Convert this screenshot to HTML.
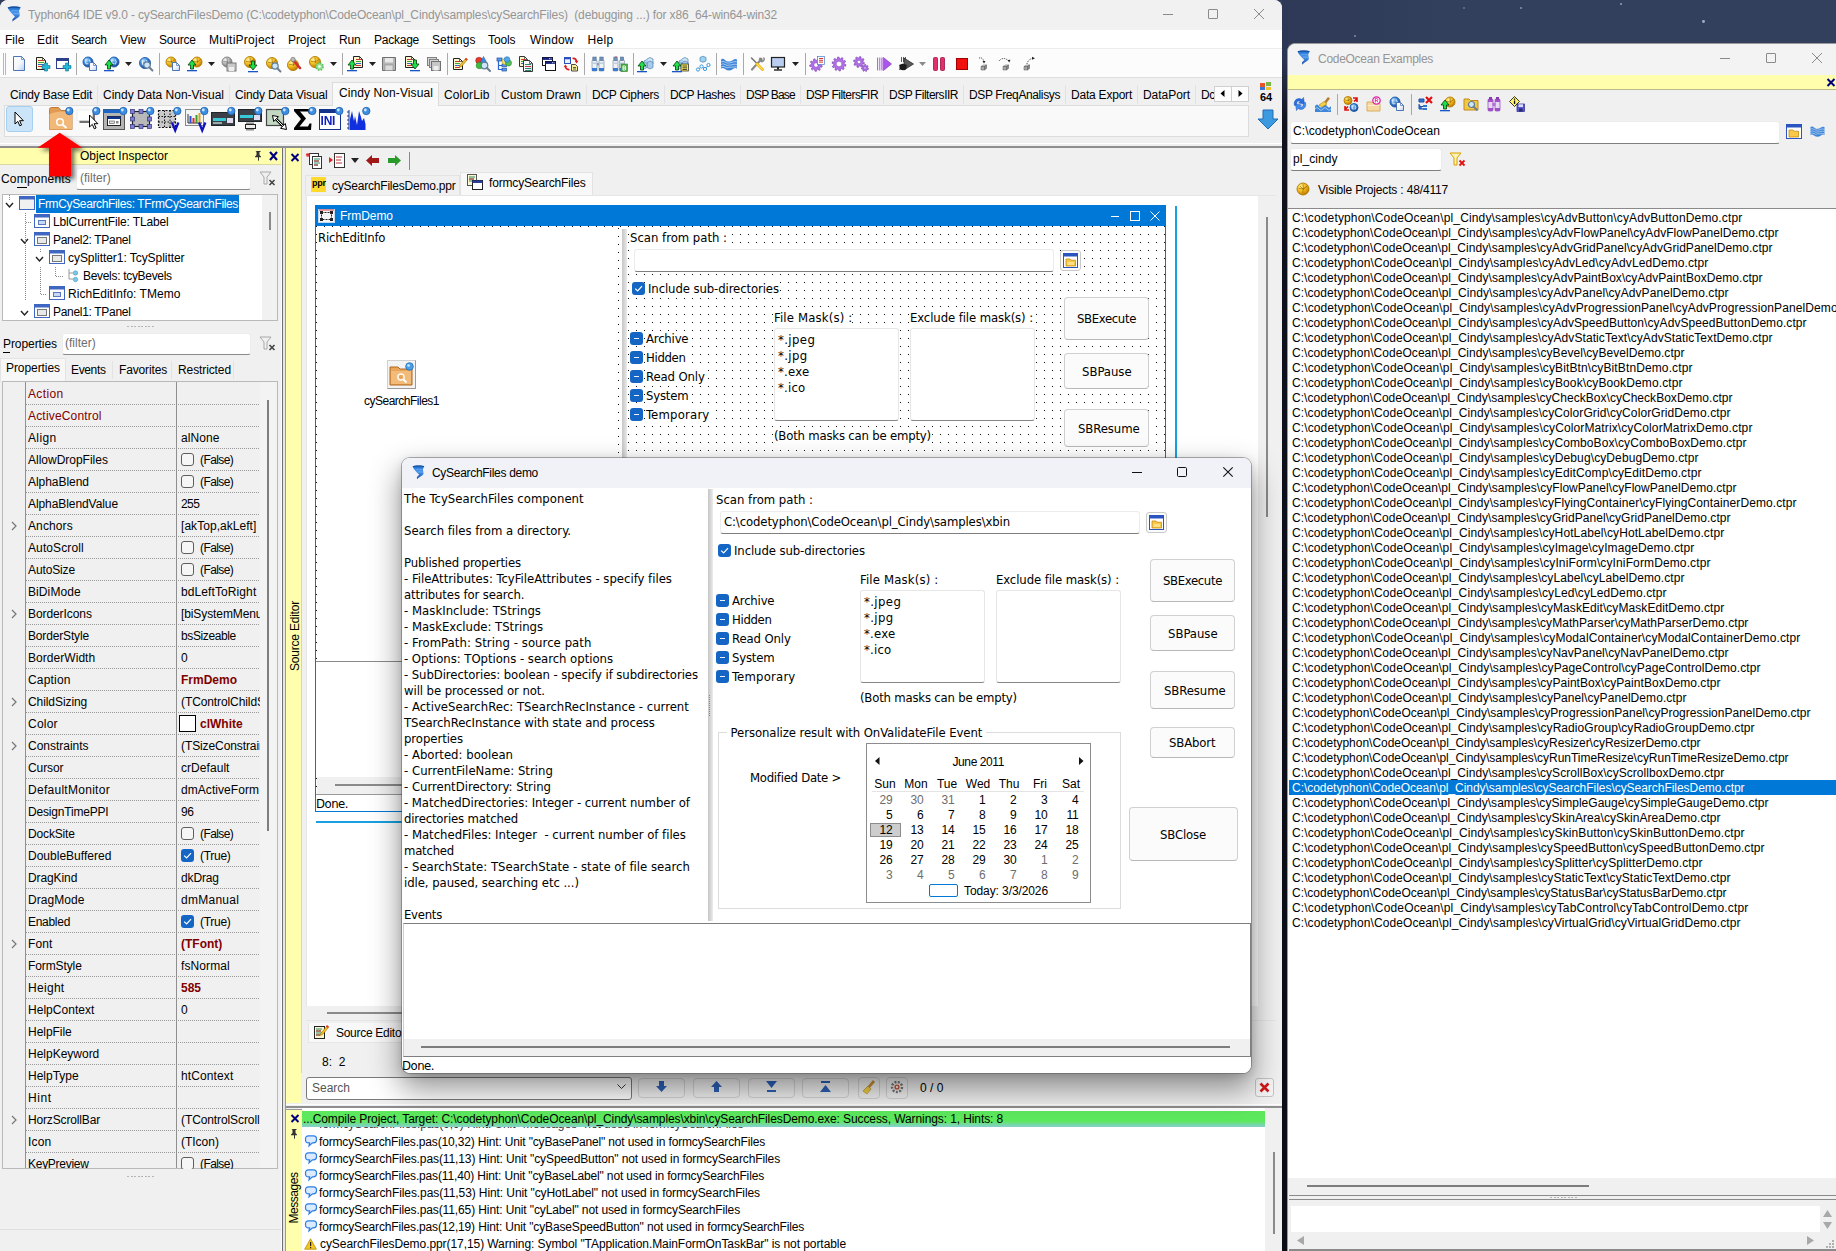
<!DOCTYPE html><html><head><meta charset="utf-8"><title>Typhon64 IDE</title><style>

*{box-sizing:border-box;margin:0;padding:0}
html,body{width:1836px;height:1251px;overflow:hidden}
body{position:relative;background:#313e5c;font-family:"Liberation Sans",sans-serif;font-size:12px;color:#000}
.a{position:absolute}
.t{position:absolute;white-space:nowrap;line-height:14px;height:14px}
.tah{font-family:"DejaVu Sans Condensed","Liberation Sans",sans-serif;font-size:13px;letter-spacing:-.1px}
svg{position:absolute;overflow:visible}
.b{font-weight:bold}

</style></head><body>
<svg width="0" height="0" style="left:0;top:0"><defs><radialGradient id="gY" cx=".35" cy=".3" r=".75"><stop offset="0" stop-color="#fff2a0"/><stop offset=".45" stop-color="#f6c020"/><stop offset="1" stop-color="#b87400"/></radialGradient><radialGradient id="gB" cx=".35" cy=".3" r=".75"><stop offset="0" stop-color="#b8e0ff"/><stop offset=".45" stop-color="#3f8fe0"/><stop offset="1" stop-color="#173f8a"/></radialGradient><radialGradient id="gG" cx=".35" cy=".3" r=".75"><stop offset="0" stop-color="#f4f4f4"/><stop offset=".5" stop-color="#b4b4b4"/><stop offset="1" stop-color="#6a6a6a"/></radialGradient><radialGradient id="gP" cx=".35" cy=".3" r=".75"><stop offset="0" stop-color="#e8c8ff"/><stop offset=".5" stop-color="#a55ad6"/><stop offset="1" stop-color="#5a2090"/></radialGradient><linearGradient id="gD" x1="0" y1="0" x2="1" y2="1"><stop offset="0" stop-color="#ffffff"/><stop offset=".55" stop-color="#f2f6fd"/><stop offset="1" stop-color="#b9cdf0"/></linearGradient></defs></svg>
<div class="a " style="left:1282px;top:0px;width:554px;height:44px;background:linear-gradient(90deg,#2d3956,#323f5d 30%,#323f5d)"></div>
<div class="a " style="left:1354px;top:35px;width:2.4px;height:2.4px;background:#c5cde0;border-radius:50%;opacity:0.55"></div>
<div class="a " style="left:1463px;top:7px;width:2px;height:2px;background:#c5cde0;border-radius:50%;opacity:0.4"></div>
<div class="a " style="left:1520px;top:7px;width:2.2px;height:2.2px;background:#c5cde0;border-radius:50%;opacity:0.6"></div>
<div class="a " style="left:1620px;top:3px;width:2.2px;height:2.2px;background:#c5cde0;border-radius:50%;opacity:0.7"></div>
<div class="a " style="left:1702px;top:20px;width:2.8px;height:2.8px;background:#c5cde0;border-radius:50%;opacity:0.75"></div>
<div class="a " style="left:1282px;top:0px;width:6px;height:1251px;background:linear-gradient(180deg,#2e3a58 0,#2b3653 60px,#1b2033 95px,#0f121d 125px,#0b0d16 100%)"></div>
<div class="a ide" style="left:0px;top:0px;width:1282px;height:1251px;background:#f0f0f0;border-radius:8px 8px 0 0;overflow:hidden"></div>
<div class="a oce" style="left:1287px;top:43px;width:560px;height:1215px;background:#f0f0f0;border-top-left-radius:8px;border:1px solid #9a9a9a;overflow:hidden"></div>
<div class="a " style="left:0px;top:0px;width:1282px;height:30px;background:#f1f1f1;border-radius:8px 8px 0 0"></div>
<svg style="left:7px;top:6px" width="14.0" height="16" viewBox="0 0 14 16"><defs><linearGradient id="tg1" x1="0" y1="0" x2="0" y2="1"><stop offset="0" stop-color="#1a5cb4"/><stop offset=".18" stop-color="#2f7fdc"/><stop offset=".45" stop-color="#4b97ea"/><stop offset=".75" stop-color="#2a6cc8"/><stop offset="1" stop-color="#2b4c98"/></linearGradient></defs><path d="M0.600 1.600C2 0.100 12 0.100 13.600 1.400L12 4.800C12.200 6.500 12.900 8.500 12.600 10C11.500 11.800 8.500 13 6.600 14.600L5.600 15.700L5.300 13.400C6.200 12.300 7.200 11.600 8 10.800C5.500 8.500 2 5 0.600 1.600Z" fill="url(#tg1)"/><path d="M1 1.900C3.500 0.900 10.500 0.900 13.200 1.700" stroke="#154f9e" stroke-width="1.100" fill="none"/><path d="M4 5.200C6.500 4.400 9.500 4.500 11.500 5.200M6.500 8C8.500 7.500 10.500 7.600 12 8.200" stroke="#8cc2f6" stroke-width=".7" fill="none" opacity=".8"/></svg>
<div class="t " style="left:28px;top:8px;letter-spacing:-0.139px;color:#959595;white-space:pre">Typhon64 IDE v9.0 - cySearchFilesDemo (C:\codetyphon\CodeOcean\pl_Cindy\samples\cySearchFiles)  (debugging ...) for x86_64-win64-win32</div>
<div class="a " style="left:1163px;top:14px;width:10px;height:1px;background:#8a8a8a"></div><div class="a " style="left:1208px;top:9px;width:10px;height:10px;border:1px solid #8a8a8a;border-radius:1px"></div><svg style="left:1254px;top:9px" width="10" height="10" viewBox="0 0 10 10"><path d="M0 0L10 10M10 0L0 10" stroke="#8a8a8a" stroke-width="1" fill="none"/></svg>
<div class="a " style="left:0px;top:30px;width:1282px;height:19px;background:#fff"></div>
<div class="t " style="left:5px;top:33px;letter-spacing:-0.011px;">File</div>
<div class="t " style="left:37px;top:33px;letter-spacing:0.232px;">Edit</div>
<div class="t " style="left:71px;top:33px;letter-spacing:-0.436px;">Search</div>
<div class="t " style="left:120px;top:33px;letter-spacing:-0.049px;">View</div>
<div class="t " style="left:159px;top:33px;letter-spacing:-0.236px;">Source</div>
<div class="t " style="left:209px;top:33px;letter-spacing:0.251px;">MultiProject</div>
<div class="t " style="left:288px;top:33px;letter-spacing:0.037px;">Project</div>
<div class="t " style="left:339px;top:33px;letter-spacing:-0.139px;">Run</div>
<div class="t " style="left:374px;top:33px;letter-spacing:-0.241px;">Package</div>
<div class="t " style="left:432px;top:33px;letter-spacing:0.02px;">Settings</div>
<div class="t " style="left:488px;top:33px;letter-spacing:-0.103px;">Tools</div>
<div class="t " style="left:530px;top:33px;letter-spacing:0.169px;">Window</div>
<div class="t " style="left:587.5px;top:33px;letter-spacing:0.328px;">Help</div>
<div class="a " style="left:0px;top:48px;width:1282px;height:1px;background:#ececec"></div>
<div class="a " style="left:0px;top:49px;width:1282px;height:28px;background:#fcfcfc"></div>
<div class="a " style="left:0px;top:77px;width:1282px;height:1px;background:#dedede"></div>
<div class="a " style="left:3px;top:53px;width:1px;height:22px;background:#b8b8b8"></div>
<div class="a " style="left:5px;top:53px;width:1px;height:22px;background:#b8b8b8"></div>
<svg style="left:11px;top:56px" width="16" height="16" viewBox="0 0 16 16"><path d="M2.5 0.5h8l3 3v11h-11z" fill="url(#gD)" stroke="#4d74b4" stroke-width="1"/><path d="M10.5 0.5v3h3" fill="none" stroke="#4d74b4" stroke-width=".7"/></svg>
<svg style="left:34px;top:56px" width="16" height="16" viewBox="0 0 16 16"><path d="M2.5 1.5h6l3 3v9h-9z" fill="#fbf6d0" stroke="#222" stroke-width="1"/><path d="M8.5 1.5v3h3" fill="none" stroke="#222" stroke-width=".7"/><rect x="4" y="4" width="6" height="1" fill="#c33"/><rect x="4" y="6" width="6" height="1" fill="#3a3"/><rect x="4" y="8" width="6" height="1" fill="#36c"/><rect x="4" y="10" width="6" height="1" fill="#c33"/><path d="M10.5 7h3v2.5h2.5v3h-2.5v2.5h-3v-2.5h-2.5v-3h2.5z" fill="#1fb8d8" stroke="#14708c" stroke-width=".6"/></svg>
<svg style="left:55px;top:56px" width="16" height="16" viewBox="0 0 16 16"><rect x="1.5" y="2.5" width="12" height="10" fill="#fff" stroke="#2b3f8a"/><rect x="1.5" y="2.5" width="12" height="2.5" fill="#2b3f8a"/><path d="M10.5 7h3v2.5h2.5v3h-2.5v2.5h-3v-2.5h-2.5v-3h2.5z" fill="#1fb8d8" stroke="#14708c" stroke-width=".6"/></svg>
<div class="a " style="left:76px;top:53px;width:1px;height:22px;background:#a9a9a9"></div>
<svg style="left:82px;top:56px" width="16" height="16" viewBox="0 0 16 16"><circle cx="6" cy="6" r="5" fill="url(#gB)" stroke="#1e58a8" stroke-width=".9"/><path d="M3.75 3.5v4.0q1.75 1.5 2.5 -0.5M7.25 3.5q2.0 2.5 0 5" stroke="#fff" stroke-width=".9" fill="none" opacity=".9"/><path d="M7.5 6.5h4l3 3v5h-7z" fill="url(#gD)" stroke="#4d74b4" stroke-width="1"/><path d="M11.5 6.5v3h3" fill="none" stroke="#4d74b4" stroke-width=".7"/></svg>
<svg style="left:104px;top:56px" width="16" height="16" viewBox="0 0 16 16"><circle cx="10" cy="6" r="5" fill="url(#gB)" stroke="#1e58a8" stroke-width=".9"/><path d="M7.75 3.5v4.0q1.75 1.5 2.5 -0.5M11.25 3.5q2.0 2.5 0 5" stroke="#fff" stroke-width=".9" fill="none" opacity=".9"/><path d="M1 9l4 -5l4 5h-2.5v4h-3v-4z" fill="#1fe04a" stroke="#053a0a" stroke-width=".8"/><rect x="0" y="14" width="10" height="1.3" fill="#1455c8"/></svg>
<svg style="left:125px;top:62px" width="7" height="4" viewBox="0 0 7 4"><path d="M0 0h7L3.5 4z" fill="#222"/></svg>
<svg style="left:138px;top:56px" width="16" height="16" viewBox="0 0 16 16"><circle cx="7" cy="7" r="5.5" fill="url(#gB)" stroke="#1e58a8" stroke-width=".9"/><path d="M4.525 4.25v4.4q1.9249999999999998 1.65 2.75 -0.55M8.375 4.25q2.2 2.75 0 5.5" stroke="#fff" stroke-width=".9" fill="none" opacity=".9"/><circle cx="9" cy="9" r="3.2" fill="#cfe6f7" stroke="#5f7d97" stroke-width="1.2"/><path d="M11.24 11.24l3.2 3.2" stroke="#6b7f90" stroke-width="2" stroke-linecap="round"/></svg>
<div class="a " style="left:159px;top:53px;width:1px;height:22px;background:#a9a9a9"></div>
<svg style="left:165px;top:56px" width="16" height="16" viewBox="0 0 16 16"><circle cx="6" cy="6" r="5" fill="url(#gY)" stroke="#b07a00" stroke-width=".9"/><path d="M2.5 5.5l4.5 0.5M6 2.0l0.5 4.5M6.5 6l3.0 -2.5" stroke="#7a4a00" stroke-width=".7" fill="none" opacity=".75"/><path d="M7.5 6.5h4l3 3v5h-7z" fill="url(#gD)" stroke="#4d74b4" stroke-width="1"/><path d="M11.5 6.5v3h3" fill="none" stroke="#4d74b4" stroke-width=".7"/></svg>
<svg style="left:187px;top:56px" width="16" height="16" viewBox="0 0 16 16"><circle cx="10" cy="6" r="5" fill="url(#gY)" stroke="#b07a00" stroke-width=".9"/><path d="M6.5 5.5l4.5 0.5M10 2.0l0.5 4.5M10.5 6l3.0 -2.5" stroke="#7a4a00" stroke-width=".7" fill="none" opacity=".75"/><path d="M1 9l4 -5l4 5h-2.5v4h-3v-4z" fill="#1fe04a" stroke="#053a0a" stroke-width=".8"/><rect x="0" y="14" width="10" height="1.3" fill="#1455c8"/></svg>
<svg style="left:208px;top:62px" width="7" height="4" viewBox="0 0 7 4"><path d="M0 0h7L3.5 4z" fill="#222"/></svg>
<svg style="left:221px;top:56px" width="16" height="16" viewBox="0 0 16 16"><circle cx="6" cy="6" r="5" fill="url(#gG)" stroke="#7d7d7d" stroke-width=".9"/><path d="M2.5 5.5l4.5 0.5M6 2.0l0.5 4.5" stroke="#555" stroke-width=".7" fill="none" opacity=".7"/><rect x="6" y="7" width="9" height="8" fill="#c9c9c9" stroke="#777"/><rect x="8" y="11" width="5" height="4" fill="#eee"/></svg>
<svg style="left:243px;top:56px" width="16" height="16" viewBox="0 0 16 16"><circle cx="7" cy="6" r="5.5" fill="url(#gY)" stroke="#b07a00" stroke-width=".9"/><path d="M3.1500000000000004 5.45l4.95 0.55M7 1.5999999999999996l0.55 4.95M7.55 6l3.3 -2.75" stroke="#7a4a00" stroke-width=".7" fill="none" opacity=".75"/><path d="M6 9l4 5l4 -5h-2.5v-4h-3v4z" fill="#1fe04a" stroke="#053a0a" stroke-width=".8"/><rect x="5" y="15" width="10" height="1.3" fill="#1455c8"/></svg>
<svg style="left:265px;top:56px" width="16" height="16" viewBox="0 0 16 16"><circle cx="7" cy="7" r="5.5" fill="url(#gY)" stroke="#b07a00" stroke-width=".9"/><path d="M3.1500000000000004 6.45l4.95 0.55M7 2.5999999999999996l0.55 4.95M7.55 7l3.3 -2.75" stroke="#7a4a00" stroke-width=".7" fill="none" opacity=".75"/><circle cx="10" cy="10" r="3.2" fill="#cfe6f7" stroke="#5f7d97" stroke-width="1.2"/><path d="M12.24 12.24l3.2 3.2" stroke="#6b7f90" stroke-width="2" stroke-linecap="round"/></svg>
<svg style="left:287px;top:56px" width="16" height="16" viewBox="0 0 16 16"><circle cx="6" cy="9" r="5.5" fill="url(#gY)" stroke="#b07a00" stroke-width=".9"/><path d="M2.1500000000000004 8.45l4.95 0.55M6 4.6l0.55 4.95M6.55 9l3.3 -2.75" stroke="#7a4a00" stroke-width=".7" fill="none" opacity=".75"/><path d="M6 4l7 8" stroke="#d03030" stroke-width="2.6" stroke-linecap="round"/><circle cx="6" cy="3.5" r="2.2" fill="#bbb" stroke="#777" stroke-width=".7"/></svg>
<svg style="left:309px;top:56px" width="16" height="16" viewBox="0 0 16 16"><circle cx="6" cy="6" r="5.5" fill="url(#gY)" stroke="#b07a00" stroke-width=".9"/><path d="M2.1500000000000004 5.45l4.95 0.55M6 1.5999999999999996l0.55 4.95M6.55 6l3.3 -2.75" stroke="#7a4a00" stroke-width=".7" fill="none" opacity=".75"/><circle cx="10.5" cy="10.5" r="3.6" fill="#8fe08f" stroke="#5fc05f" stroke-width="1.6" stroke-dasharray="1.6 1.2"/><circle cx="10.5" cy="10.5" r="1.3" fill="#fff"/></svg>
<svg style="left:330px;top:62px" width="7" height="4" viewBox="0 0 7 4"><path d="M0 0h7L3.5 4z" fill="#222"/></svg>
<div class="a " style="left:342px;top:53px;width:1px;height:22px;background:#a9a9a9"></div>
<svg style="left:348px;top:56px" width="16" height="16" viewBox="0 0 16 16"><path d="M5.5 0.5h6l3 3v8h-9z" fill="#fbf6d0" stroke="#222" stroke-width="1"/><path d="M11.5 0.5v3h3" fill="none" stroke="#222" stroke-width=".7"/><rect x="8" y="3" width="5" height="1" fill="#c33"/><rect x="8" y="5" width="5" height="1" fill="#3a3"/><rect x="8" y="7" width="5" height="1" fill="#36c"/><rect x="8" y="9" width="5" height="1" fill="#c33"/><path d="M0 9l4 -5l4 5h-2.5v4h-3v-4z" fill="#1fe04a" stroke="#053a0a" stroke-width=".8"/><rect x="-1" y="14" width="10" height="1.3" fill="#1455c8"/></svg>
<svg style="left:369px;top:62px" width="7" height="4" viewBox="0 0 7 4"><path d="M0 0h7L3.5 4z" fill="#222"/></svg>
<svg style="left:381px;top:56px" width="16" height="16" viewBox="0 0 16 16"><path d="M1.5 1.5h13v13h-13z" fill="#b5b5b5" stroke="#6f6f6f"/><rect x="4" y="2" width="8" height="4.5" fill="#e9e9e9"/><rect x="4" y="9" width="8" height="5.5" fill="#dcdcdc" stroke="#8a8a8a" stroke-width=".6"/></svg>
<svg style="left:404px;top:56px" width="16" height="16" viewBox="0 0 16 16"><path d="M1.5 0.5h6l3 3v8h-9z" fill="#fbf6d0" stroke="#222" stroke-width="1"/><path d="M7.5 0.5v3h3" fill="none" stroke="#222" stroke-width=".7"/><rect x="3" y="3" width="5" height="1" fill="#c33"/><rect x="3" y="5" width="5" height="1" fill="#3a3"/><rect x="3" y="7" width="5" height="1" fill="#36c"/><rect x="3" y="9" width="5" height="1" fill="#c33"/><path d="M7 8l4 5l4 -5h-2.5v-4h-3v4z" fill="#1fe04a" stroke="#053a0a" stroke-width=".8"/><rect x="6" y="14" width="10" height="1.3" fill="#1455c8"/></svg>
<svg style="left:426px;top:56px" width="16" height="16" viewBox="0 0 16 16"><rect x="1.5" y="1.5" width="9" height="8" fill="#d5d5d5" stroke="#808080"/><rect x="3.5" y="3.5" width="9" height="8" fill="#d5d5d5" stroke="#808080"/><rect x="5.5" y="5.5" width="9" height="9" fill="#c6c6c6" stroke="#707070"/><rect x="7.5" y="10" width="5" height="4.5" fill="#eee"/></svg>
<div class="a " style="left:447px;top:53px;width:1px;height:22px;background:#a9a9a9"></div>
<svg style="left:452px;top:56px" width="16" height="16" viewBox="0 0 16 16"><path d="M1.5 2.5h6l3 3v8h-9z" fill="#fbf6d0" stroke="#222" stroke-width="1"/><path d="M7.5 2.5v3h3" fill="none" stroke="#222" stroke-width=".7"/><rect x="3" y="5" width="5" height="1" fill="#c33"/><rect x="3" y="7" width="5" height="1" fill="#3a3"/><rect x="3" y="9" width="5" height="1" fill="#36c"/><rect x="3" y="11" width="5" height="1" fill="#c33"/><path d="M8 9l6 -7l1.6 1.4l-6 7l-2.4 1z" fill="#f2c12e" stroke="#a36b00" stroke-width=".6"/><path d="M13.4 2.6l1.6 1.4" stroke="#e03030" stroke-width="1.6"/></svg>
<svg style="left:475px;top:56px" width="16" height="16" viewBox="0 0 16 16"><circle cx="4" cy="4.500" r="3.300" fill="#e03a2a" stroke="#a01810" stroke-width=".5"/><path d="M8.500 .5l3.500 6.500h-7z" fill="#3b8be0" stroke="#1a58a8" stroke-width=".5"/><circle cx="4.500" cy="9.500" r="3.300" fill="#3dbb3d" stroke="#1a7a1a" stroke-width=".5"/><circle cx="9.5" cy="9.5" r="3.3" fill="#cfe6f7" stroke="#5f7d97" stroke-width="1.2"/><path d="M11.809999999999999 11.809999999999999l3.2 3.2" stroke="#6b7f90" stroke-width="2" stroke-linecap="round"/></svg>
<svg style="left:496px;top:56px" width="16" height="16" viewBox="0 0 16 16"><path d="M2.500 4v9.500h4M2.500 9.500h4" fill="none" stroke="#2e66d0" stroke-width="1.200"/><rect x="1" y="2" width="5" height="3" fill="#5a9af0" stroke="#1e4fa0" stroke-width=".7"/><rect x="6" y="8" width="4.500" height="2.800" fill="#5a9af0" stroke="#1e4fa0" stroke-width=".7"/><rect x="6" y="12.200" width="4.500" height="2.800" fill="#5a9af0" stroke="#1e4fa0" stroke-width=".7"/><circle cx="9" cy="5.500" r="3" fill="#f2e070" stroke="#b09a20" stroke-width=".6"/><circle cx="12.500" cy="7" r="3" fill="#58c058" stroke="#2a8a2a" stroke-width=".6"/><circle cx="11" cy="3.500" r="2.800" fill="#4fa8e8" stroke="#2276b5" stroke-width=".6"/></svg>
<svg style="left:518px;top:56px" width="16" height="16" viewBox="0 0 16 16"><path d="M1.5 0.5h5l3 3v7h-8z" fill="#fbf6d0" stroke="#333" stroke-width="1"/><path d="M6.5 0.5v3h3" fill="none" stroke="#333" stroke-width=".7"/><rect x="3" y="3" width="4" height="1" fill="#c33"/><rect x="3" y="5" width="4" height="1" fill="#3a3"/><rect x="3" y="7" width="4" height="1" fill="#36c"/><path d="M5.5 4.5h6l3 3v8h-9z" fill="url(#gD)" stroke="#333" stroke-width="1"/><path d="M11.5 4.5v3h3" fill="none" stroke="#333" stroke-width=".7"/><rect x="7" y="8" width="6" height="1" fill="#2a8a6a"/><rect x="7" y="10" width="6" height="1" fill="#c33"/><rect x="7" y="12" width="6" height="1" fill="#2a8a6a"/><rect x="7" y="14" width="6" height="1" fill="#2a8a6a"/></svg>
<svg style="left:541px;top:56px" width="16" height="16" viewBox="0 0 16 16"><rect x="1.500" y="1.500" width="10" height="8" fill="#fff" stroke="#111"/><rect x="1.500" y="1.500" width="10" height="2.400" fill="#14207a"/><rect x="4.500" y="5.500" width="10" height="9" fill="#fff" stroke="#111"/><rect x="4.500" y="5.500" width="10" height="2.400" fill="#14207a"/><path d="M8 2.700h2.500M11 6.700h2.500" stroke="#fff" stroke-width=".8" stroke-dasharray="1 .6"/></svg>
<svg style="left:563px;top:56px" width="16" height="16" viewBox="0 0 16 16"><rect x="1.500" y="1.500" width="6" height="6" fill="#eaf2ff" stroke="#2a50c0"/><rect x="1.500" y="1.500" width="6" height="1.800" fill="#2a50c0"/><path d="M8.500 8.500h4l2 2v4.500h-6z" fill="#f7ef9a" stroke="#222" stroke-width=".8"/><path d="M10 11.500h3M10 13h3" stroke="#222" stroke-width=".7"/><path d="M9.500 2.500q3.500-.5 4 3" stroke="#e01818" stroke-width="1.700" fill="none"/><path d="M11.800 5.200l2 2.300l1.500-2.800z" fill="#e01818"/><path d="M6.500 13.500q-3.500.5-4-3" stroke="#e01818" stroke-width="1.700" fill="none"/><path d="M4.200 10.800l-2-2.300l-1.500 2.800z" fill="#e01818"/></svg>
<div class="a " style="left:584px;top:53px;width:1px;height:22px;background:#a9a9a9"></div>
<svg style="left:590px;top:56px" width="16" height="16" viewBox="0 0 16 16"><rect x="2" y="4" width="5" height="11" rx="1" fill="#eef2f7" stroke="#7890a8" stroke-width=".7"/><rect x="2.8" y="1" width="3.400" height="3.500" fill="#6f90b8" stroke="#4a6a90" stroke-width=".5"/><rect x="2" y="12" width="5" height="3" fill="#3a7ad0"/><rect x="2" y="6.500" width="5" height="1.500" fill="#c0cede"/><rect x="9" y="4" width="5" height="11" rx="1" fill="#eef2f7" stroke="#7890a8" stroke-width=".7"/><rect x="9.8" y="1" width="3.400" height="3.500" fill="#6f90b8" stroke="#4a6a90" stroke-width=".5"/><rect x="9" y="12" width="5" height="3" fill="#3a7ad0"/><rect x="9" y="6.500" width="5" height="1.500" fill="#c0cede"/><rect x="7" y="7" width="2" height="2.500" fill="#8aa0b8"/></svg>
<svg style="left:612px;top:56px" width="16" height="16" viewBox="0 0 16 16"><rect x="1" y="4" width="5" height="11" rx="1" fill="#eef2f7" stroke="#7890a8" stroke-width=".7"/><rect x="1.8" y="1" width="3.400" height="3.500" fill="#6f90b8" stroke="#4a6a90" stroke-width=".5"/><rect x="1" y="12" width="5" height="3" fill="#3a7ad0"/><rect x="1" y="6.500" width="5" height="1.500" fill="#c0cede"/><rect x="7.5" y="4" width="5" height="11" rx="1" fill="#eef2f7" stroke="#7890a8" stroke-width=".7"/><rect x="8.3" y="1" width="3.400" height="3.500" fill="#6f90b8" stroke="#4a6a90" stroke-width=".5"/><rect x="7.5" y="12" width="5" height="3" fill="#3a7ad0"/><rect x="7.5" y="6.500" width="5" height="1.500" fill="#c0cede"/><rect x="9" y="8" width="6.500" height="7.500" fill="#4fb04f" stroke="#2a7a2a" stroke-width=".6"/><path d="M11 10v4h1.800q1 0 1-1t-1-1q.8 0 .8-1t-1-1zM11 12h2" stroke="#fff" stroke-width=".9" fill="none"/><path d="M3 1h2" stroke="#c06060"/></svg>
<div class="a " style="left:633px;top:53px;width:1px;height:22px;background:#a9a9a9"></div>
<svg style="left:638px;top:56px" width="16" height="16" viewBox="0 0 16 16"><path d="M6 5l3-1.500l3 1.500v4l-3 1.500l-3-1.500z" fill="#b8d8f0" stroke="#4a80b0" stroke-width=".7"/><path d="M9 3l3-1.500l3 1.500v5l-3 1.500" fill="#cfe6f7" stroke="#4a80b0" stroke-width=".7"/><path d="M9 6.500l3-1.500l3 1.500v5l-3 1.500l-3-1.500z" fill="#a8cce8" stroke="#4a80b0" stroke-width=".7"/><path d="M4 7.500l2.500-1.200l2.500 1.200v4l-2.500 1.200l-2.500-1.200z" fill="#c4def2" stroke="#4a80b0" stroke-width=".7"/><path d="M0 10l4 -5l4 5h-2.5v4h-3v-4z" fill="#1fe04a" stroke="#053a0a" stroke-width=".8"/><rect x="-1" y="15" width="10" height="1.3" fill="#1455c8"/></svg>
<svg style="left:660px;top:62px" width="7" height="4" viewBox="0 0 7 4"><path d="M0 0h7L3.5 4z" fill="#222"/></svg>
<svg style="left:673px;top:56px" width="16" height="16" viewBox="0 0 16 16"><path d="M6 5l3-1.500l3 1.500v4l-3 1.500l-3-1.500z" fill="#b8d8f0" stroke="#4a80b0" stroke-width=".7"/><path d="M9 3l3-1.500l3 1.500v5l-3 1.500" fill="#cfe6f7" stroke="#4a80b0" stroke-width=".7"/><path d="M9 6.500l3-1.500l3 1.500v5l-3 1.500l-3-1.500z" fill="#a8cce8" stroke="#4a80b0" stroke-width=".7"/><path d="M4 7.500l2.500-1.200l2.500 1.200v4l-2.500 1.200l-2.500-1.200z" fill="#c4def2" stroke="#4a80b0" stroke-width=".7"/><rect x="8" y="8" width="7.500" height="7" fill="#f7e85a" stroke="#222" stroke-width=".7"/><path d="M9.500 10h4.500M9.500 11.800h4.500M9.500 13.500h4.500" stroke="#222" stroke-width=".8"/><path d="M0 10l4 -5l4 5h-2.5v4h-3v-4z" fill="#1fe04a" stroke="#053a0a" stroke-width=".8"/><rect x="-1" y="15" width="10" height="1.3" fill="#1455c8"/></svg>
<svg style="left:695px;top:56px" width="16" height="16" viewBox="0 0 16 16"><path d="M5 1.500l3-1.300l3 1.300v3.500l-3 1.300l-3-1.300z" fill="#9fd0ee" stroke="#3a88b8" stroke-width=".7"/><path d="M3 13.500l3.500-3l3.500 2.500l3.500-4" stroke="#5aaee0" stroke-width="1" fill="none"/><circle cx="3" cy="13.500" r="1.600" fill="#fff" stroke="#3a98d8"/><circle cx="6.500" cy="10.500" r="1.600" fill="#fff" stroke="#3a98d8"/><circle cx="10" cy="13" r="1.600" fill="#fff" stroke="#3a98d8"/><circle cx="13.500" cy="9" r="1.600" fill="#fff" stroke="#3a98d8"/></svg>
<div class="a " style="left:716px;top:53px;width:1px;height:22px;background:#a9a9a9"></div>
<svg style="left:721px;top:56px" width="16" height="16" viewBox="0 0 16 16"><path d="M0 3.500q2-1.500 4 .5t4 1.500q2 0 4-1.500t4-.5v9q-2-1-4 .5t-4 1.500q-2 0-4-1.500t-4-.5z" fill="#3f86d8"/><path d="M0 6q2-1.500 4 0t4 1q2-.2 4-1t4 0M0 8.500q2-1.500 4 0t4 .6q2 0 4-.6t4 0M0 11q2-1.500 4 0t4 .2q2 0 4-.2t4 0" stroke="#cfe2f8" stroke-width=".7" fill="none"/></svg>
<div class="a " style="left:743px;top:53px;width:1px;height:22px;background:#a9a9a9"></div>
<svg style="left:749px;top:56px" width="16" height="16" viewBox="0 0 16 16"><path d="M3 13.500L12.500 3" stroke="#8a8a8a" stroke-width="2.200" stroke-linecap="round"/><path d="M11 1.500a3 3 0 0 0 3.500 3.500l-1.500-.5l-.5-1.500z" fill="#9a9a9a" stroke="#666" stroke-width=".5"/><circle cx="12.800" cy="3.200" r="2.300" fill="none" stroke="#8a8a8a" stroke-width="1.400" stroke-dasharray="9 5.400" transform="rotate(-45 12.800 3.200)"/><path d="M2.500 2l6 6" stroke="#777" stroke-width="1.600" stroke-linecap="round"/><path d="M8 8l5.500 5.500" stroke="#f2c020" stroke-width="3" stroke-linecap="round"/><path d="M8 8l5.500 5.500" stroke="#fbe27a" stroke-width="1"/></svg>
<svg style="left:770px;top:56px" width="16" height="16" viewBox="0 0 16 16"><rect x="1.500" y="1.500" width="13" height="9.500" fill="#b9cdf0" stroke="#222" stroke-width="1.200"/><rect x="7" y="11" width="2" height="2.500" fill="#222"/><rect x="4" y="13.300" width="8" height="1.400" fill="#222"/></svg>
<svg style="left:792px;top:62px" width="7" height="4" viewBox="0 0 7 4"><path d="M0 0h7L3.5 4z" fill="#222"/></svg>
<div class="a " style="left:805px;top:53px;width:1px;height:22px;background:#a9a9a9"></div>
<svg style="left:809px;top:56px" width="16" height="16" viewBox="0 0 16 16"><path d="M11.60 9.00L13.27 9.66L12.92 11.15L11.13 11.02L10.52 11.96L11.38 13.53L10.15 14.46L8.87 13.20L7.80 13.53L7.44 15.28L5.91 15.20L5.73 13.42L4.70 12.98L3.30 14.10L2.17 13.05L3.19 11.57L2.68 10.57L0.89 10.52L0.70 9.00L2.43 8.52L2.68 7.43L1.34 6.24L2.17 4.95L3.80 5.69L4.70 5.02L4.44 3.24L5.91 2.80L6.68 4.41L7.80 4.47L8.74 2.94L10.15 3.54L9.70 5.28L10.52 6.04L12.22 5.48L12.92 6.85L11.46 7.89Z" fill="#b070e8" stroke="#7a3ab0" stroke-width=".6"/><circle cx="7" cy="9" r="2.2" fill="#fff" stroke="#7a3ab0" stroke-width=".5"/><rect x="8.500" y=".5" width="7" height="8" fill="#fff" stroke="#4a78c8" stroke-width=".7"/><path d="M10 2.500h4M10 4.300h4M10 6.100h4" stroke="#d02020" stroke-width=".9"/></svg>
<svg style="left:831px;top:56px" width="16" height="16" viewBox="0 0 16 16"><path d="M13.20 8.00L14.97 8.66L14.66 10.16L12.77 10.07L12.21 11.06L13.25 12.63L12.11 13.66L10.65 12.48L9.61 12.95L9.53 14.83L8.00 15.00L7.51 13.18L6.39 12.95L5.22 14.42L3.89 13.66L4.56 11.90L3.79 11.06L1.97 11.56L1.34 10.16L2.93 9.13L2.80 8.00L1.03 7.34L1.34 5.84L3.23 5.93L3.79 4.94L2.75 3.37L3.89 2.34L5.35 3.52L6.39 3.05L6.47 1.17L8.00 1.00L8.49 2.82L9.61 3.05L10.78 1.58L12.11 2.34L11.44 4.10L12.21 4.94L14.03 4.44L14.66 5.84L13.07 6.87Z" fill="#b070e8" stroke="#7a3ab0" stroke-width=".6"/><circle cx="8" cy="8" r="2.8" fill="#fff" stroke="#7a3ab0" stroke-width=".5"/></svg>
<svg style="left:853px;top:56px" width="16" height="16" viewBox="0 0 16 16"><path d="M10.00 6.00L11.46 6.65L11.08 8.10L9.49 7.95L8.83 8.83L9.41 10.32L8.10 11.08L7.09 9.85L6.00 10.00L5.35 11.46L3.90 11.08L4.05 9.49L3.17 8.83L1.68 9.41L0.92 8.10L2.15 7.09L2.00 6.00L0.54 5.35L0.92 3.90L2.51 4.05L3.17 3.17L2.59 1.68L3.90 0.92L4.91 2.15L6.00 2.00L6.65 0.54L8.10 0.92L7.95 2.51L8.83 3.17L10.32 2.59L11.08 3.90L9.85 4.91Z" fill="#b070e8" stroke="#7a3ab0" stroke-width=".6"/><circle cx="6" cy="6" r="1.8" fill="#fff" stroke="#7a3ab0" stroke-width=".5"/><path d="M14.60 12.00L15.57 12.48L15.24 13.56L14.17 13.43L13.62 14.03L13.85 15.09L12.80 15.51L12.23 14.59L11.42 14.53L10.74 15.37L9.76 14.81L10.12 13.80L9.66 13.13L8.58 13.11L8.40 12.00L9.42 11.65L9.66 10.87L9.00 10.02L9.76 9.19L10.67 9.77L11.42 9.47L11.68 8.41L12.80 8.49L12.91 9.57L13.62 9.97L14.60 9.51L15.24 10.44L14.47 11.20Z" fill="#b070e8" stroke="#7a3ab0" stroke-width=".6"/><circle cx="12" cy="12" r="1.1" fill="#fff" stroke="#7a3ab0" stroke-width=".5"/></svg>
<svg style="left:876px;top:56px" width="16" height="16" viewBox="0 0 16 16"><rect x="1" y="1.500" width="1.100" height="13" fill="#b06ae0"/><rect x="3.200" y="1.500" width="1.100" height="13" fill="#b06ae0"/><rect x="5.400" y="1.500" width="1.100" height="13" fill="#a050d8"/><path d="M7.500 1.500l8 6.500l-8 6.500z" fill="#a855e8" stroke="#7a3ab0" stroke-width=".6"/></svg>
<svg style="left:898px;top:56px" width="16" height="16" viewBox="0 0 16 16"><rect x="3" y="1" width=".8" height="5" fill="#333"/><rect x="5" y="1" width=".8" height="5" fill="#333"/><rect x="7" y="1" width=".8" height="5" fill="#333"/><path d="M6 2l9.500 6l-9.500 6z" fill="#5a5a5a" stroke="#222" stroke-width=".7"/><ellipse cx="5" cy="11" rx="3.600" ry="3.300" fill="#1c1c1c"/><path d="M1 9l2 1M1 13.500l2-1M9 9l-2 1" stroke="#111" stroke-width=".8"/></svg>
<svg style="left:919px;top:62px" width="7" height="4" viewBox="0 0 7 4"><path d="M0 0h7L3.5 4z" fill="#8a8a8a"/></svg>
<svg style="left:931px;top:56px" width="16" height="16" viewBox="0 0 16 16"><rect x="2.5" y="1.5" width="4" height="13" rx="1" fill="#e0306a" stroke="#a01040" stroke-width=".8"/><rect x="9.5" y="1.5" width="4" height="13" rx="1" fill="#e0306a" stroke="#a01040" stroke-width=".8"/></svg>
<svg style="left:954px;top:56px" width="16" height="16" viewBox="0 0 16 16"><rect x="2.5" y="2.5" width="11" height="11" fill="#f01010" stroke="#a00000"/></svg>
<svg style="left:976px;top:56px" width="16" height="16" viewBox="0 0 16 16"><path d="M5 10.5l2.500-1.500h3l-2 1.500z" fill="#d8d8d8" stroke="#555" stroke-width=".5"/><path d="M5 10.5h3.500v3.500h-3.500z" fill="#a8a8a8" stroke="#555" stroke-width=".5"/><path d="M8.5 10.5l2-1.500v3.500l-2 1.500z" fill="#888" stroke="#555" stroke-width=".5"/><path d="M3 2q4-1 5 4" stroke="#333" fill="none" stroke-dasharray="1 1"/><path d="M6.500 5l1.500 2.500l1.500-2.500z" fill="#222"/></svg>
<svg style="left:998px;top:56px" width="16" height="16" viewBox="0 0 16 16"><path d="M5 10.5l2.500-1.500h3l-2 1.500z" fill="#d8d8d8" stroke="#555" stroke-width=".5"/><path d="M5 10.5h3.500v3.500h-3.500z" fill="#a8a8a8" stroke="#555" stroke-width=".5"/><path d="M8.5 10.5l2-1.500v3.500l-2 1.500z" fill="#888" stroke="#555" stroke-width=".5"/><path d="M1 5q4-5 10 0" stroke="#333" fill="none" stroke-dasharray="1 1"/><path d="M9.500 4l1.800 2.500l1.200-2.800z" fill="#222"/></svg>
<svg style="left:1021px;top:56px" width="16" height="16" viewBox="0 0 16 16"><path d="M3 10.5l2.500-1.500h3l-2 1.500z" fill="#d8d8d8" stroke="#555" stroke-width=".5"/><path d="M3 10.5h3.500v3.500h-3.500z" fill="#a8a8a8" stroke="#555" stroke-width=".5"/><path d="M6.5 10.5l2-1.500v3.500l-2 1.500z" fill="#888" stroke="#555" stroke-width=".5"/><path d="M6 8q1-5 6-5.500" stroke="#333" fill="none" stroke-dasharray="1 1"/><path d="M11 .8l3 1.500l-3 1.500z" fill="#222"/></svg>
<div class="a " style="left:0px;top:78px;width:1282px;height:66px;background:#f0f0f0"></div>
<div class="a " style="left:4px;top:105px;width:1245px;height:32px;background:#f9f9f9;border:1px solid #dcdcdc"></div>
<div class="t " style="left:10px;top:88px;letter-spacing:-0.224px;">Cindy Base Edit</div>
<div class="t " style="left:103px;top:88px;letter-spacing:-0.008px;">Cindy Data Non-Visual</div>
<div class="t " style="left:235px;top:88px;letter-spacing:-0.156px;">Cindy Data Visual</div>
<div class="a " style="left:332px;top:82px;width:107px;height:24px;background:#f9f9f9;border:1px solid #dcdcdc;border-bottom:none"></div>
<div class="t " style="left:339px;top:86px;letter-spacing:0.094px;">Cindy Non-Visual</div>
<div class="t " style="left:444px;top:88px;letter-spacing:0.1px;">ColorLib</div>
<div class="t " style="left:501px;top:88px;letter-spacing:0.053px;">Custom Drawn</div>
<div class="t " style="left:592px;top:88px;letter-spacing:-0.256px;">DCP Ciphers</div>
<div class="t " style="left:670px;top:88px;letter-spacing:-0.414px;">DCP Hashes</div>
<div class="t " style="left:746px;top:88px;letter-spacing:-0.766px;">DSP Base</div>
<div class="t " style="left:806px;top:88px;letter-spacing:-0.556px;">DSP FiltersFIR</div>
<div class="t " style="left:889px;top:88px;letter-spacing:-0.484px;">DSP FiltersIIR</div>
<div class="t " style="left:969px;top:88px;letter-spacing:-0.384px;">DSP FreqAnalisys</div>
<div class="t " style="left:1071px;top:88px;letter-spacing:-0.213px;">Data Export</div>
<div class="t " style="left:1143px;top:88px;letter-spacing:-0.043px;">DataPort</div>
<div class="t " style="left:1201px;top:88px;letter-spacing:-0.336px;">Dc</div>
<div class="a " style="left:97px;top:85px;width:1px;height:19px;background:#e2e2e2"></div>
<div class="a " style="left:229px;top:85px;width:1px;height:19px;background:#e2e2e2"></div>
<div class="a " style="left:495px;top:85px;width:1px;height:19px;background:#e2e2e2"></div>
<div class="a " style="left:586px;top:85px;width:1px;height:19px;background:#e2e2e2"></div>
<div class="a " style="left:664px;top:85px;width:1px;height:19px;background:#e2e2e2"></div>
<div class="a " style="left:740px;top:85px;width:1px;height:19px;background:#e2e2e2"></div>
<div class="a " style="left:800px;top:85px;width:1px;height:19px;background:#e2e2e2"></div>
<div class="a " style="left:883px;top:85px;width:1px;height:19px;background:#e2e2e2"></div>
<div class="a " style="left:963px;top:85px;width:1px;height:19px;background:#e2e2e2"></div>
<div class="a " style="left:1065px;top:85px;width:1px;height:19px;background:#e2e2e2"></div>
<div class="a " style="left:1137px;top:85px;width:1px;height:19px;background:#e2e2e2"></div>
<div class="a " style="left:1195px;top:85px;width:1px;height:19px;background:#e2e2e2"></div>
<div class="a " style="left:1214px;top:86px;width:18px;height:16px;background:#fdfdfd;border:1px solid #cfcfcf"></div>
<div class="a " style="left:1231px;top:86px;width:18px;height:16px;background:#fdfdfd;border:1px solid #cfcfcf"></div>
<svg style="left:1220px;top:90px" width="5" height="7" viewBox="0 0 5 7"><path d="M4.500 0v7L.5 3.500z" fill="#000"/></svg>
<svg style="left:1238px;top:90px" width="5" height="7" viewBox="0 0 5 7"><path d="M.5 0v7l4-3.500z" fill="#000"/></svg>
<div class="t " style="left:1260px;top:90px;font-weight:bold;font-size:11px">64</div>
<svg style="left:1259px;top:81px" width="14" height="10" viewBox="0 0 14 10"><path d="M1 2h5v4H1z" fill="#e8542a"/><path d="M7 1h5v4H7z" fill="#7ab648"/><path d="M1 6h5v3H1z" fill="#3a78d4"/><path d="M7 6h5v3H7z" fill="#f2c12e"/></svg>
<svg style="left:1257px;top:109px" width="22" height="22" viewBox="0 0 22 22"><path d="M6 1h10v9h5L11 20 1 10h5z" fill="#3c9ae0" stroke="#1f6db5" stroke-width="1"/></svg>
<div class="a " style="left:0px;top:143px;width:1282px;height:1px;background:#fff"></div>
<div class="a " style="left:0px;top:146px;width:1282px;height:2px;background:#8e8e8e"></div>
<div class="a " style="left:0px;top:148px;width:281px;height:16px;background:#fffeac"></div>
<div class="t " style="left:80px;top:149px;letter-spacing:0.041px;">Object Inspector</div>
<svg style="left:255px;top:151px" width="7" height="10" viewBox="0 0 7 10"><path d="M1.5 0h4v1h-1v3l1.5 1.5v.7H4v3L3.5 10L3 9.2v-3H0v-.7L1.5 4V1h-1z" fill="#333"/></svg>
<svg style="left:269px;top:152px" width="9" height="8" viewBox="0 0 9 8"><path d="M1 0l7 8M8 0l-7 8" stroke="#000080" stroke-width="2.1"/></svg>
<div class="a " style="left:0px;top:164px;width:281px;height:1px;background:#d8d8a0"></div>
<div class="t " style="left:1px;top:172px;letter-spacing:0.197px;">Components</div>
<div class="a " style="left:17px;top:187px;width:10px;height:1px;background:#000"></div>
<div class="a " style="left:76px;top:168px;width:175px;height:22px;background:#fff;border:1px solid #ececec;border-bottom:1px solid #8a8a8a;border-radius:3px"></div>
<div class="t " style="left:80px;top:171px;color:#6d6d6d">(filter)</div>
<svg style="left:259px;top:171px" width="18" height="16" viewBox="0 0 18 16"><path d="M1 1h11l-4 5v7h-3v-7z" fill="none" stroke="#a8a8a8" stroke-width="1"/><path d="M10.5 9l5 5M15.5 9l-5 5" stroke="#444" stroke-width="1.6"/></svg>
<div class="a " style="left:2px;top:194px;width:276px;height:127px;background:#fff;border:1px solid #b9b9b9"></div>
<div class="a " style="left:262px;top:195px;width:15px;height:125px;background:#f1f1f1"></div>
<div class="a " style="left:269px;top:212px;width:2px;height:18px;background:#8a8a8a"></div>
<svg style="left:19px;top:196px" width="16" height="14" viewBox="0 0 16 14"><rect x=".5" y=".5" width="15" height="13" fill="#fdfdfd" stroke="#3f66c0"/><rect x=".5" y=".5" width="15" height="3" fill="#3f66c0"/><rect x="1" y="4" width="14" height="9" fill="#f0f0f0"/></svg>
<svg style="left:5px;top:200px" width="9" height="9" viewBox="0 0 9 9"><path d="M1 3l3.5 4l3.5-4" fill="none" stroke="#222" stroke-width="1.4"/></svg>
<div class="a " style="left:36px;top:195px;width:203px;height:18px;background:#0078d7"></div>
<div class="t " style="left:38px;top:197px;letter-spacing:-0.357px;color:#fff">FrmCySearchFiles: TFrmCySearchFiles</div>
<svg style="left:34px;top:214px" width="16" height="14" viewBox="0 0 16 14"><rect x=".5" y=".5" width="15" height="13" fill="#fdfdfd" stroke="#3f66c0"/><rect x=".5" y=".5" width="15" height="3" fill="#3f66c0"/><rect x="4.5" y="6.5" width="7" height="4" fill="#c9d8f5" stroke="#5878c0"/></svg>
<div class="t " style="left:53px;top:215px;letter-spacing:-0.132px;">LblCurrentFile: TLabel</div>
<svg style="left:34px;top:232px" width="16" height="14" viewBox="0 0 16 14"><rect x=".5" y=".5" width="15" height="13" fill="#fdfdfd" stroke="#3f66c0"/><rect x=".5" y=".5" width="15" height="3" fill="#3f66c0"/><rect x="3.5" y="5.5" width="9" height="6" fill="#e8e8e8" stroke="#777"/></svg>
<svg style="left:20px;top:236px" width="9" height="9" viewBox="0 0 9 9"><path d="M1 3l3.5 4l3.5-4" fill="none" stroke="#222" stroke-width="1.4"/></svg>
<div class="t " style="left:53px;top:233px;letter-spacing:-0.308px;">Panel2: TPanel</div>
<svg style="left:49px;top:250px" width="16" height="14" viewBox="0 0 16 14"><rect x=".5" y=".5" width="15" height="13" fill="#fdfdfd" stroke="#3f66c0"/><rect x=".5" y=".5" width="15" height="3" fill="#3f66c0"/><rect x="3.5" y="5.5" width="9" height="6" fill="#e8e8e8" stroke="#777"/></svg>
<svg style="left:35px;top:254px" width="9" height="9" viewBox="0 0 9 9"><path d="M1 3l3.5 4l3.5-4" fill="none" stroke="#222" stroke-width="1.4"/></svg>
<div class="t " style="left:68px;top:251px;letter-spacing:-0.054px;">cySplitter1: TcySplitter</div>
<svg style="left:67px;top:269px" width="12" height="14" viewBox="0 0 12 14"><path d="M2 0v10h4M2 4h4" stroke="#999" fill="none"/><circle cx="8.5" cy="4" r="2.2" fill="#7cc8e8" stroke="#3a98c0" stroke-width=".6"/><circle cx="8.5" cy="10.5" r="2.2" fill="#7cc8e8" stroke="#3a98c0" stroke-width=".6"/></svg>
<div class="t " style="left:83px;top:269px;letter-spacing:-0.313px;">Bevels: tcyBevels</div>
<svg style="left:49px;top:286px" width="16" height="14" viewBox="0 0 16 14"><rect x=".5" y=".5" width="15" height="13" fill="#fdfdfd" stroke="#3f66c0"/><rect x=".5" y=".5" width="15" height="3" fill="#3f66c0"/><rect x="4.5" y="6.5" width="7" height="4" fill="#c9d8f5" stroke="#5878c0"/></svg>
<div class="t " style="left:68px;top:287px;letter-spacing:0.032px;">RichEditInfo: TMemo</div>
<svg style="left:34px;top:304px" width="16" height="14" viewBox="0 0 16 14"><rect x=".5" y=".5" width="15" height="13" fill="#fdfdfd" stroke="#3f66c0"/><rect x=".5" y=".5" width="15" height="3" fill="#3f66c0"/><rect x="3.5" y="5.5" width="9" height="6" fill="#e8e8e8" stroke="#777"/></svg>
<svg style="left:20px;top:308px" width="9" height="9" viewBox="0 0 9 9"><path d="M1 3l3.5 4l3.5-4" fill="none" stroke="#222" stroke-width="1.4"/></svg>
<div class="t " style="left:53px;top:305px;letter-spacing:-0.308px;">Panel1: TPanel</div>
<div class="a " style="left:9px;top:195px;width:1px;height:5px;background-image:linear-gradient(#888 50%,transparent 50%);background-size:1px 2px"></div>
<div class="a " style="left:25px;top:213px;width:1px;height:88px;background-image:linear-gradient(#888 50%,transparent 50%);background-size:1px 2px"></div>
<div class="a " style="left:26px;top:222px;width:6px;height:1px;background-image:linear-gradient(90deg,#888 50%,transparent 50%);background-size:2px 1px"></div>
<div class="a " style="left:40px;top:249px;width:1px;height:4px;background-image:linear-gradient(#888 50%,transparent 50%);background-size:1px 2px"></div>
<div class="a " style="left:40px;top:267px;width:1px;height:28px;background-image:linear-gradient(#888 50%,transparent 50%);background-size:1px 2px"></div>
<div class="a " style="left:41px;top:294px;width:6px;height:1px;background-image:linear-gradient(90deg,#888 50%,transparent 50%);background-size:2px 1px"></div>
<div class="a " style="left:55px;top:267px;width:1px;height:10px;background-image:linear-gradient(#888 50%,transparent 50%);background-size:1px 2px"></div>
<div class="a " style="left:56px;top:276px;width:7px;height:1px;background-image:linear-gradient(90deg,#888 50%,transparent 50%);background-size:2px 1px"></div>
<div class="a " style="left:127.0px;top:326px;width:2px;height:1px;background:#b5b5b5"></div>
<div class="a " style="left:130.5px;top:326px;width:2px;height:1px;background:#b5b5b5"></div>
<div class="a " style="left:134.0px;top:326px;width:2px;height:1px;background:#b5b5b5"></div>
<div class="a " style="left:137.5px;top:326px;width:2px;height:1px;background:#b5b5b5"></div>
<div class="a " style="left:141.0px;top:326px;width:2px;height:1px;background:#b5b5b5"></div>
<div class="a " style="left:144.5px;top:326px;width:2px;height:1px;background:#b5b5b5"></div>
<div class="a " style="left:148.0px;top:326px;width:2px;height:1px;background:#b5b5b5"></div>
<div class="a " style="left:151.5px;top:326px;width:2px;height:1px;background:#b5b5b5"></div>
<div class="t " style="left:3px;top:337px;letter-spacing:-0.069px;">Properties</div>
<div class="a " style="left:3px;top:352px;width:7px;height:1px;background:#000"></div>
<div class="a " style="left:62px;top:333px;width:189px;height:22px;background:#fff;border:1px solid #ececec;border-bottom:1px solid #8a8a8a;border-radius:3px"></div>
<div class="t " style="left:65px;top:336px;color:#6d6d6d">(filter)</div>
<svg style="left:259px;top:336px" width="18" height="16" viewBox="0 0 18 16"><path d="M1 1h11l-4 5v7h-3v-7z" fill="none" stroke="#a8a8a8" stroke-width="1"/><path d="M10.5 9l5 5M15.5 9l-5 5" stroke="#444" stroke-width="1.6"/></svg>
<div class="a " style="left:0px;top:358px;width:66px;height:24px;background:#f7f7f7;border:1px solid #e3e3e3;border-bottom:none"></div>
<div class="t " style="left:6px;top:361px;letter-spacing:-0.069px;">Properties</div>
<div class="t " style="left:71px;top:363px;letter-spacing:-0.362px;">Events</div>
<div class="t " style="left:119px;top:363px;letter-spacing:-0.149px;">Favorites</div>
<div class="t " style="left:178px;top:363px;letter-spacing:-0.102px;">Restricted</div>
<div class="a " style="left:112px;top:361px;width:1px;height:18px;background:#e3e3e3"></div>
<div class="a " style="left:171px;top:361px;width:1px;height:18px;background:#e3e3e3"></div>
<div class="a " style="left:233px;top:361px;width:1px;height:18px;background:#e3e3e3"></div>
<div class="a " style="left:2px;top:381px;width:276px;height:788px;background:#f0f0f0;border:1px solid #b9b9b9;overflow:hidden"></div>
<div class="a " style="left:25px;top:382px;width:1px;height:786px;background:#8f8f8f"></div>
<div class="a " style="left:176px;top:382px;width:1px;height:786px;background:#8f8f8f"></div>
<div class="a " style="left:260px;top:382px;width:17px;height:786px;background:#f3f3f3"></div>
<div class="a " style="left:267px;top:400px;width:2px;height:431px;background:#7e7e7e"></div>
<div class="t " style="left:28px;top:387px;letter-spacing:0.359px;color:#800000">Action</div>
<div class="a " style="left:26px;top:404px;width:150px;height:1px;background-image:linear-gradient(90deg,#9a9a9a 50%,transparent 50%);background-size:2px 1px"></div>
<div class="a " style="left:178px;top:404px;width:82px;height:1px;background-image:linear-gradient(90deg,#9a9a9a 50%,transparent 50%);background-size:2px 1px"></div>
<div class="t " style="left:28px;top:409px;letter-spacing:0.18px;color:#800000">ActiveControl</div>
<div class="a " style="left:26px;top:426px;width:150px;height:1px;background-image:linear-gradient(90deg,#9a9a9a 50%,transparent 50%);background-size:2px 1px"></div>
<div class="a " style="left:178px;top:426px;width:82px;height:1px;background-image:linear-gradient(90deg,#9a9a9a 50%,transparent 50%);background-size:2px 1px"></div>
<div class="t " style="left:28px;top:431px;letter-spacing:0.362px;">Align</div>
<div class="a " style="left:26px;top:448px;width:150px;height:1px;background-image:linear-gradient(90deg,#9a9a9a 50%,transparent 50%);background-size:2px 1px"></div>
<div class="a " style="left:178px;top:448px;width:82px;height:1px;background-image:linear-gradient(90deg,#9a9a9a 50%,transparent 50%);background-size:2px 1px"></div>
<div class="t" style="left:181px;top:431px;width:79px;overflow:hidden;letter-spacing:0.095px;">alNone</div>
<div class="t " style="left:28px;top:453px;letter-spacing:-0.01px;">AllowDropFiles</div>
<div class="a " style="left:26px;top:470px;width:150px;height:1px;background-image:linear-gradient(90deg,#9a9a9a 50%,transparent 50%);background-size:2px 1px"></div>
<div class="a " style="left:178px;top:470px;width:82px;height:1px;background-image:linear-gradient(90deg,#9a9a9a 50%,transparent 50%);background-size:2px 1px"></div>
<div class="a " style="left:181px;top:453px;width:13px;height:13px;background:#f6f6f6;border:1px solid #5e5e5e;border-radius:3px"></div>
<div class="t " style="left:200px;top:453px;letter-spacing:-0.592px;">(False)</div>
<div class="t " style="left:28px;top:475px;letter-spacing:-0.048px;">AlphaBlend</div>
<div class="a " style="left:26px;top:492px;width:150px;height:1px;background-image:linear-gradient(90deg,#9a9a9a 50%,transparent 50%);background-size:2px 1px"></div>
<div class="a " style="left:178px;top:492px;width:82px;height:1px;background-image:linear-gradient(90deg,#9a9a9a 50%,transparent 50%);background-size:2px 1px"></div>
<div class="a " style="left:181px;top:475px;width:13px;height:13px;background:#f6f6f6;border:1px solid #5e5e5e;border-radius:3px"></div>
<div class="t " style="left:200px;top:475px;letter-spacing:-0.592px;">(False)</div>
<div class="t " style="left:28px;top:497px;letter-spacing:-0.078px;">AlphaBlendValue</div>
<div class="a " style="left:26px;top:514px;width:150px;height:1px;background-image:linear-gradient(90deg,#9a9a9a 50%,transparent 50%);background-size:2px 1px"></div>
<div class="a " style="left:178px;top:514px;width:82px;height:1px;background-image:linear-gradient(90deg,#9a9a9a 50%,transparent 50%);background-size:2px 1px"></div>
<div class="t" style="left:181px;top:497px;width:79px;overflow:hidden;letter-spacing:-0.572px;">255</div>
<div class="t " style="left:28px;top:519px;letter-spacing:0.112px;">Anchors</div>
<svg style="left:11px;top:521px" width="6" height="10" viewBox="0 0 6 10"><path d="M1 1l4 4l-4 4" fill="none" stroke="#777" stroke-width="1.2"/></svg>
<div class="a " style="left:26px;top:536px;width:150px;height:1px;background-image:linear-gradient(90deg,#9a9a9a 50%,transparent 50%);background-size:2px 1px"></div>
<div class="a " style="left:178px;top:536px;width:82px;height:1px;background-image:linear-gradient(90deg,#9a9a9a 50%,transparent 50%);background-size:2px 1px"></div>
<div class="t" style="left:181px;top:519px;width:79px;overflow:hidden;letter-spacing:0.045px;">[akTop,akLeft]</div>
<div class="t " style="left:28px;top:541px;letter-spacing:0.101px;">AutoScroll</div>
<div class="a " style="left:26px;top:558px;width:150px;height:1px;background-image:linear-gradient(90deg,#9a9a9a 50%,transparent 50%);background-size:2px 1px"></div>
<div class="a " style="left:178px;top:558px;width:82px;height:1px;background-image:linear-gradient(90deg,#9a9a9a 50%,transparent 50%);background-size:2px 1px"></div>
<div class="a " style="left:181px;top:541px;width:13px;height:13px;background:#f6f6f6;border:1px solid #5e5e5e;border-radius:3px"></div>
<div class="t " style="left:200px;top:541px;letter-spacing:-0.592px;">(False)</div>
<div class="t " style="left:28px;top:563px;letter-spacing:-0.127px;">AutoSize</div>
<div class="a " style="left:26px;top:580px;width:150px;height:1px;background-image:linear-gradient(90deg,#9a9a9a 50%,transparent 50%);background-size:2px 1px"></div>
<div class="a " style="left:178px;top:580px;width:82px;height:1px;background-image:linear-gradient(90deg,#9a9a9a 50%,transparent 50%);background-size:2px 1px"></div>
<div class="a " style="left:181px;top:563px;width:13px;height:13px;background:#f6f6f6;border:1px solid #5e5e5e;border-radius:3px"></div>
<div class="t " style="left:200px;top:563px;letter-spacing:-0.592px;">(False)</div>
<div class="t " style="left:28px;top:585px;letter-spacing:0.096px;">BiDiMode</div>
<div class="a " style="left:26px;top:602px;width:150px;height:1px;background-image:linear-gradient(90deg,#9a9a9a 50%,transparent 50%);background-size:2px 1px"></div>
<div class="a " style="left:178px;top:602px;width:82px;height:1px;background-image:linear-gradient(90deg,#9a9a9a 50%,transparent 50%);background-size:2px 1px"></div>
<div class="t" style="left:181px;top:585px;width:79px;overflow:hidden;letter-spacing:0.098px;">bdLeftToRight</div>
<div class="t " style="left:28px;top:607px;letter-spacing:-0.081px;">BorderIcons</div>
<svg style="left:11px;top:609px" width="6" height="10" viewBox="0 0 6 10"><path d="M1 1l4 4l-4 4" fill="none" stroke="#777" stroke-width="1.2"/></svg>
<div class="a " style="left:26px;top:624px;width:150px;height:1px;background-image:linear-gradient(90deg,#9a9a9a 50%,transparent 50%);background-size:2px 1px"></div>
<div class="a " style="left:178px;top:624px;width:82px;height:1px;background-image:linear-gradient(90deg,#9a9a9a 50%,transparent 50%);background-size:2px 1px"></div>
<div class="t" style="left:181px;top:607px;width:79px;overflow:hidden;letter-spacing:-.1px;">[biSystemMenu,biMinimize,biMaximize]</div>
<div class="t " style="left:28px;top:629px;letter-spacing:-0.163px;">BorderStyle</div>
<div class="a " style="left:26px;top:646px;width:150px;height:1px;background-image:linear-gradient(90deg,#9a9a9a 50%,transparent 50%);background-size:2px 1px"></div>
<div class="a " style="left:178px;top:646px;width:82px;height:1px;background-image:linear-gradient(90deg,#9a9a9a 50%,transparent 50%);background-size:2px 1px"></div>
<div class="t" style="left:181px;top:629px;width:79px;overflow:hidden;letter-spacing:-0.39px;">bsSizeable</div>
<div class="t " style="left:28px;top:651px;letter-spacing:0.047px;">BorderWidth</div>
<div class="a " style="left:26px;top:668px;width:150px;height:1px;background-image:linear-gradient(90deg,#9a9a9a 50%,transparent 50%);background-size:2px 1px"></div>
<div class="a " style="left:178px;top:668px;width:82px;height:1px;background-image:linear-gradient(90deg,#9a9a9a 50%,transparent 50%);background-size:2px 1px"></div>
<div class="t" style="left:181px;top:651px;width:79px;overflow:hidden;letter-spacing:-0.172px;">0</div>
<div class="t " style="left:28px;top:673px;letter-spacing:0.192px;">Caption</div>
<div class="a " style="left:26px;top:690px;width:150px;height:1px;background-image:linear-gradient(90deg,#9a9a9a 50%,transparent 50%);background-size:2px 1px"></div>
<div class="a " style="left:178px;top:690px;width:82px;height:1px;background-image:linear-gradient(90deg,#9a9a9a 50%,transparent 50%);background-size:2px 1px"></div>
<div class="t " style="left:181px;top:673px;color:#800000;font-weight:bold">FrmDemo</div>
<div class="t " style="left:28px;top:695px;letter-spacing:-0.077px;">ChildSizing</div>
<svg style="left:11px;top:697px" width="6" height="10" viewBox="0 0 6 10"><path d="M1 1l4 4l-4 4" fill="none" stroke="#777" stroke-width="1.2"/></svg>
<div class="a " style="left:26px;top:712px;width:150px;height:1px;background-image:linear-gradient(90deg,#9a9a9a 50%,transparent 50%);background-size:2px 1px"></div>
<div class="a " style="left:178px;top:712px;width:82px;height:1px;background-image:linear-gradient(90deg,#9a9a9a 50%,transparent 50%);background-size:2px 1px"></div>
<div class="t" style="left:181px;top:695px;width:79px;overflow:hidden;letter-spacing:-.1px;">(TControlChildSizing)</div>
<div class="t " style="left:28px;top:717px;letter-spacing:0.223px;">Color</div>
<div class="a " style="left:26px;top:734px;width:150px;height:1px;background-image:linear-gradient(90deg,#9a9a9a 50%,transparent 50%);background-size:2px 1px"></div>
<div class="a " style="left:178px;top:734px;width:82px;height:1px;background-image:linear-gradient(90deg,#9a9a9a 50%,transparent 50%);background-size:2px 1px"></div>
<div class="a " style="left:179px;top:715px;width:17px;height:17px;background:#fff;border:1px solid #000"></div>
<div class="t " style="left:200px;top:717px;color:#800000;font-weight:bold">clWhite</div>
<div class="t " style="left:28px;top:739px;letter-spacing:-0.008px;">Constraints</div>
<svg style="left:11px;top:741px" width="6" height="10" viewBox="0 0 6 10"><path d="M1 1l4 4l-4 4" fill="none" stroke="#777" stroke-width="1.2"/></svg>
<div class="a " style="left:26px;top:756px;width:150px;height:1px;background-image:linear-gradient(90deg,#9a9a9a 50%,transparent 50%);background-size:2px 1px"></div>
<div class="a " style="left:178px;top:756px;width:82px;height:1px;background-image:linear-gradient(90deg,#9a9a9a 50%,transparent 50%);background-size:2px 1px"></div>
<div class="t" style="left:181px;top:739px;width:79px;overflow:hidden;letter-spacing:-.1px;">(TSizeConstraints)</div>
<div class="t " style="left:28px;top:761px;letter-spacing:-0.086px;">Cursor</div>
<div class="a " style="left:26px;top:778px;width:150px;height:1px;background-image:linear-gradient(90deg,#9a9a9a 50%,transparent 50%);background-size:2px 1px"></div>
<div class="a " style="left:178px;top:778px;width:82px;height:1px;background-image:linear-gradient(90deg,#9a9a9a 50%,transparent 50%);background-size:2px 1px"></div>
<div class="t" style="left:181px;top:761px;width:79px;overflow:hidden;letter-spacing:0.054px;">crDefault</div>
<div class="t " style="left:28px;top:783px;letter-spacing:0.276px;">DefaultMonitor</div>
<div class="a " style="left:26px;top:800px;width:150px;height:1px;background-image:linear-gradient(90deg,#9a9a9a 50%,transparent 50%);background-size:2px 1px"></div>
<div class="a " style="left:178px;top:800px;width:82px;height:1px;background-image:linear-gradient(90deg,#9a9a9a 50%,transparent 50%);background-size:2px 1px"></div>
<div class="t" style="left:181px;top:783px;width:79px;overflow:hidden;letter-spacing:0.055px;">dmActiveForm</div>
<div class="t " style="left:28px;top:805px;letter-spacing:-0.186px;">DesignTimePPI</div>
<div class="a " style="left:26px;top:822px;width:150px;height:1px;background-image:linear-gradient(90deg,#9a9a9a 50%,transparent 50%);background-size:2px 1px"></div>
<div class="a " style="left:178px;top:822px;width:82px;height:1px;background-image:linear-gradient(90deg,#9a9a9a 50%,transparent 50%);background-size:2px 1px"></div>
<div class="t" style="left:181px;top:805px;width:79px;overflow:hidden;letter-spacing:-0.422px;">96</div>
<div class="t " style="left:28px;top:827px;letter-spacing:-0.152px;">DockSite</div>
<div class="a " style="left:26px;top:844px;width:150px;height:1px;background-image:linear-gradient(90deg,#9a9a9a 50%,transparent 50%);background-size:2px 1px"></div>
<div class="a " style="left:178px;top:844px;width:82px;height:1px;background-image:linear-gradient(90deg,#9a9a9a 50%,transparent 50%);background-size:2px 1px"></div>
<div class="a " style="left:181px;top:827px;width:13px;height:13px;background:#f6f6f6;border:1px solid #5e5e5e;border-radius:3px"></div>
<div class="t " style="left:200px;top:827px;letter-spacing:-0.592px;">(False)</div>
<div class="t " style="left:28px;top:849px;letter-spacing:0.01px;">DoubleBuffered</div>
<div class="a " style="left:26px;top:866px;width:150px;height:1px;background-image:linear-gradient(90deg,#9a9a9a 50%,transparent 50%);background-size:2px 1px"></div>
<div class="a " style="left:178px;top:866px;width:82px;height:1px;background-image:linear-gradient(90deg,#9a9a9a 50%,transparent 50%);background-size:2px 1px"></div>
<div class="a " style="left:181px;top:849px;width:13px;height:13px;background:#1566c4;border-radius:3px"></div><svg style="left:181px;top:849px" width="13" height="13" viewBox="0 0 13 13"><path d="M3.2 6.6l2.4 2.4l4.4-4.8" fill="none" stroke="#fff" stroke-width="1.2"/></svg>
<div class="t " style="left:200px;top:849px;letter-spacing:-0.272px;">(True)</div>
<div class="t " style="left:28px;top:871px;letter-spacing:-0.104px;">DragKind</div>
<div class="a " style="left:26px;top:888px;width:150px;height:1px;background-image:linear-gradient(90deg,#9a9a9a 50%,transparent 50%);background-size:2px 1px"></div>
<div class="a " style="left:178px;top:888px;width:82px;height:1px;background-image:linear-gradient(90deg,#9a9a9a 50%,transparent 50%);background-size:2px 1px"></div>
<div class="t" style="left:181px;top:871px;width:79px;overflow:hidden;letter-spacing:-0.131px;">dkDrag</div>
<div class="t " style="left:28px;top:893px;letter-spacing:0.059px;">DragMode</div>
<div class="a " style="left:26px;top:910px;width:150px;height:1px;background-image:linear-gradient(90deg,#9a9a9a 50%,transparent 50%);background-size:2px 1px"></div>
<div class="a " style="left:178px;top:910px;width:82px;height:1px;background-image:linear-gradient(90deg,#9a9a9a 50%,transparent 50%);background-size:2px 1px"></div>
<div class="t" style="left:181px;top:893px;width:79px;overflow:hidden;letter-spacing:0.271px;">dmManual</div>
<div class="t " style="left:28px;top:915px;letter-spacing:-0.29px;">Enabled</div>
<div class="a " style="left:26px;top:932px;width:150px;height:1px;background-image:linear-gradient(90deg,#9a9a9a 50%,transparent 50%);background-size:2px 1px"></div>
<div class="a " style="left:178px;top:932px;width:82px;height:1px;background-image:linear-gradient(90deg,#9a9a9a 50%,transparent 50%);background-size:2px 1px"></div>
<div class="a " style="left:181px;top:915px;width:13px;height:13px;background:#1566c4;border-radius:3px"></div><svg style="left:181px;top:915px" width="13" height="13" viewBox="0 0 13 13"><path d="M3.2 6.6l2.4 2.4l4.4-4.8" fill="none" stroke="#fff" stroke-width="1.2"/></svg>
<div class="t " style="left:200px;top:915px;letter-spacing:-0.272px;">(True)</div>
<div class="t " style="left:28px;top:937px;letter-spacing:0.1px;">Font</div>
<svg style="left:11px;top:939px" width="6" height="10" viewBox="0 0 6 10"><path d="M1 1l4 4l-4 4" fill="none" stroke="#777" stroke-width="1.2"/></svg>
<div class="a " style="left:26px;top:954px;width:150px;height:1px;background-image:linear-gradient(90deg,#9a9a9a 50%,transparent 50%);background-size:2px 1px"></div>
<div class="a " style="left:178px;top:954px;width:82px;height:1px;background-image:linear-gradient(90deg,#9a9a9a 50%,transparent 50%);background-size:2px 1px"></div>
<div class="t " style="left:181px;top:937px;color:#800000;font-weight:bold">(TFont)</div>
<div class="t " style="left:28px;top:959px;letter-spacing:-0.108px;">FormStyle</div>
<div class="a " style="left:26px;top:976px;width:150px;height:1px;background-image:linear-gradient(90deg,#9a9a9a 50%,transparent 50%);background-size:2px 1px"></div>
<div class="a " style="left:178px;top:976px;width:82px;height:1px;background-image:linear-gradient(90deg,#9a9a9a 50%,transparent 50%);background-size:2px 1px"></div>
<div class="t" style="left:181px;top:959px;width:79px;overflow:hidden;letter-spacing:0.111px;">fsNormal</div>
<div class="t " style="left:28px;top:981px;letter-spacing:0.302px;">Height</div>
<div class="a " style="left:26px;top:998px;width:150px;height:1px;background-image:linear-gradient(90deg,#9a9a9a 50%,transparent 50%);background-size:2px 1px"></div>
<div class="a " style="left:178px;top:998px;width:82px;height:1px;background-image:linear-gradient(90deg,#9a9a9a 50%,transparent 50%);background-size:2px 1px"></div>
<div class="t " style="left:181px;top:981px;color:#800000;font-weight:bold">585</div>
<div class="t " style="left:28px;top:1003px;letter-spacing:0.034px;">HelpContext</div>
<div class="a " style="left:26px;top:1020px;width:150px;height:1px;background-image:linear-gradient(90deg,#9a9a9a 50%,transparent 50%);background-size:2px 1px"></div>
<div class="a " style="left:178px;top:1020px;width:82px;height:1px;background-image:linear-gradient(90deg,#9a9a9a 50%,transparent 50%);background-size:2px 1px"></div>
<div class="t" style="left:181px;top:1003px;width:79px;overflow:hidden;letter-spacing:-0.172px;">0</div>
<div class="t " style="left:28px;top:1025px;letter-spacing:-0.041px;">HelpFile</div>
<div class="a " style="left:26px;top:1042px;width:150px;height:1px;background-image:linear-gradient(90deg,#9a9a9a 50%,transparent 50%);background-size:2px 1px"></div>
<div class="a " style="left:178px;top:1042px;width:82px;height:1px;background-image:linear-gradient(90deg,#9a9a9a 50%,transparent 50%);background-size:2px 1px"></div>
<div class="t " style="left:28px;top:1047px;letter-spacing:-0.007px;">HelpKeyword</div>
<div class="a " style="left:26px;top:1064px;width:150px;height:1px;background-image:linear-gradient(90deg,#9a9a9a 50%,transparent 50%);background-size:2px 1px"></div>
<div class="a " style="left:178px;top:1064px;width:82px;height:1px;background-image:linear-gradient(90deg,#9a9a9a 50%,transparent 50%);background-size:2px 1px"></div>
<div class="t " style="left:28px;top:1069px;letter-spacing:-0.013px;">HelpType</div>
<div class="a " style="left:26px;top:1086px;width:150px;height:1px;background-image:linear-gradient(90deg,#9a9a9a 50%,transparent 50%);background-size:2px 1px"></div>
<div class="a " style="left:178px;top:1086px;width:82px;height:1px;background-image:linear-gradient(90deg,#9a9a9a 50%,transparent 50%);background-size:2px 1px"></div>
<div class="t" style="left:181px;top:1069px;width:79px;overflow:hidden;letter-spacing:0.106px;">htContext</div>
<div class="t " style="left:28px;top:1091px;letter-spacing:0.589px;">Hint</div>
<div class="a " style="left:26px;top:1108px;width:150px;height:1px;background-image:linear-gradient(90deg,#9a9a9a 50%,transparent 50%);background-size:2px 1px"></div>
<div class="a " style="left:178px;top:1108px;width:82px;height:1px;background-image:linear-gradient(90deg,#9a9a9a 50%,transparent 50%);background-size:2px 1px"></div>
<div class="t " style="left:28px;top:1113px;letter-spacing:-0.156px;">HorzScrollBar</div>
<svg style="left:11px;top:1115px" width="6" height="10" viewBox="0 0 6 10"><path d="M1 1l4 4l-4 4" fill="none" stroke="#777" stroke-width="1.2"/></svg>
<div class="a " style="left:26px;top:1130px;width:150px;height:1px;background-image:linear-gradient(90deg,#9a9a9a 50%,transparent 50%);background-size:2px 1px"></div>
<div class="a " style="left:178px;top:1130px;width:82px;height:1px;background-image:linear-gradient(90deg,#9a9a9a 50%,transparent 50%);background-size:2px 1px"></div>
<div class="t" style="left:181px;top:1113px;width:79px;overflow:hidden;letter-spacing:-.1px;">(TControlScrollBar)</div>
<div class="t " style="left:28px;top:1135px;letter-spacing:0.182px;">Icon</div>
<div class="a " style="left:26px;top:1152px;width:150px;height:1px;background-image:linear-gradient(90deg,#9a9a9a 50%,transparent 50%);background-size:2px 1px"></div>
<div class="a " style="left:178px;top:1152px;width:82px;height:1px;background-image:linear-gradient(90deg,#9a9a9a 50%,transparent 50%);background-size:2px 1px"></div>
<div class="t" style="left:181px;top:1135px;width:79px;overflow:hidden;letter-spacing:-0.014px;">(TIcon)</div>
<div class="t " style="left:28px;top:1157px;letter-spacing:-0.276px;">KeyPreview</div>
<div class="a " style="left:181px;top:1157px;width:13px;height:13px;background:#f6f6f6;border:1px solid #5e5e5e;border-radius:3px"></div>
<div class="t " style="left:200px;top:1157px;letter-spacing:-0.592px;">(False)</div>
<div class="a " style="left:0px;top:1169px;width:281px;height:82px;background:#f0f0f0"></div>
<div class="a " style="left:127.0px;top:1176px;width:2px;height:1px;background:#b5b5b5"></div>
<div class="a " style="left:130.5px;top:1176px;width:2px;height:1px;background:#b5b5b5"></div>
<div class="a " style="left:134.0px;top:1176px;width:2px;height:1px;background:#b5b5b5"></div>
<div class="a " style="left:137.5px;top:1176px;width:2px;height:1px;background:#b5b5b5"></div>
<div class="a " style="left:141.0px;top:1176px;width:2px;height:1px;background:#b5b5b5"></div>
<div class="a " style="left:144.5px;top:1176px;width:2px;height:1px;background:#b5b5b5"></div>
<div class="a " style="left:148.0px;top:1176px;width:2px;height:1px;background:#b5b5b5"></div>
<div class="a " style="left:151.5px;top:1176px;width:2px;height:1px;background:#b5b5b5"></div>
<div class="a " style="left:0px;top:1229px;width:281px;height:1px;background:#dedede"></div>
<div class="a " style="left:281px;top:148px;width:1px;height:1103px;background:#fdfdfd"></div>
<div class="a " style="left:282px;top:148px;width:1px;height:1103px;background:#6f6f6f"></div>
<div class="a " style="left:283px;top:148px;width:2px;height:1103px;background:#e6e6e6"></div>
<div class="a " style="left:285px;top:148px;width:1px;height:1103px;background:#9a9a9a"></div>
<div class="a " style="left:286px;top:148px;width:16px;height:955px;background:#fffeac;border-right:1px solid #d4d4c0"></div>
<svg style="left:291px;top:154px" width="8" height="7" viewBox="0 0 8 7"><path d="M.5 0l7 7M7.5 0l-7 7" stroke="#000080" stroke-width="2"/></svg>
<div class="t" style="left:294.5px;top:635.5px;transform:translate(-50%,-50%) rotate(-90deg);letter-spacing:-0.207px;">Source Editor</div>
<div class="a " style="left:302px;top:148px;width:980px;height:958px;background:#f0f0f0"></div>
<svg style="left:306px;top:152px" width="17" height="18" viewBox="0 0 17 18"><rect x="3.5" y="1.5" width="9" height="11" fill="#fff" stroke="#333"/><rect x="6.5" y="4.5" width="9" height="12" fill="#fff" stroke="#333"/><path d="M8 7h6M8 9h5M8 11h6M8 13h4" stroke="#2a8a6a" stroke-width="1"/><path d="M8 9h5M8 13h4" stroke="#c03030"/><path d="M0 2l4 2M0 4l4-2M2 1v4" stroke="#e02020" stroke-width="1.1"/></svg>
<svg style="left:329px;top:152px" width="17" height="18" viewBox="0 0 17 18"><rect x="5.5" y="1.5" width="10" height="14" fill="#fff" stroke="#333"/><path d="M7 5h6M7 8h5M7 11h6" stroke="#c03030" stroke-width="1"/><path d="M0 5l4 3l-4 3z" fill="#e02020"/></svg>
<svg style="left:351px;top:158px" width="8" height="5" viewBox="0 0 8 5"><path d="M0 0h8L4 5z" fill="#222"/></svg>
<svg style="left:366px;top:155px" width="13" height="11" viewBox="0 0 13 11"><path d="M0 5.5L6 0v3h7v5H6v3z" fill="#a01818"/></svg>
<svg style="left:388px;top:155px" width="13" height="11" viewBox="0 0 13 11"><path d="M13 5.5L7 0v3H0v5h7v3z" fill="#2a9a2a"/></svg>
<div class="a " style="left:409px;top:152px;width:1px;height:18px;background:#8a8a8a"></div>
<div class="a " style="left:305px;top:175px;width:155px;height:20px;background:#f0f0f0;border:1px solid #e3e3e3;border-bottom:none"></div>
<div class="a " style="left:311px;top:177px;width:15px;height:15px;background:#ffd92e"></div>
<div class="t" style="left:312px;top:176px;font-size:9px;font-weight:bold;letter-spacing:-.3px">ppr</div>
<div class="t " style="left:332px;top:179px;letter-spacing:-0.217px;">cySearchFilesDemo.ppr</div>
<div class="a " style="left:460px;top:172px;width:133px;height:24px;background:#f8f8f8;border:1px solid #e3e3e3;border-bottom:none"></div>
<svg style="left:467px;top:174px" width="16" height="16" viewBox="0 0 16 16"><rect x=".5" y=".5" width="9" height="11" fill="#fbf6d0" stroke="#555"/><path d="M2 3h6M2 5h5M2 7h6" stroke="#2a8a6a"/><path d="M2 5h5" stroke="#c03030"/><rect x="5.5" y="6.5" width="10" height="9" fill="#fff" stroke="#222"/><rect x="5.5" y="6.5" width="10" height="2.5" fill="#2a3f9a"/></svg>
<div class="t " style="left:489px;top:176px;letter-spacing:-0.162px;">formcySearchFiles</div>
<div class="a " style="left:306px;top:195px;width:970px;height:826px;background:#fff;border:1px solid #e6e6e6"></div>
<div class="a " style="left:1258px;top:196px;width:18px;height:824px;background:#f0f0f0"></div>
<div class="a " style="left:1266px;top:217px;width:2px;height:300px;background:#8a8a8a"></div>
<div class="a " style="left:315px;top:205px;width:851px;height:21px;background:#0078d7"></div>
<svg style="left:318px;top:209px" width="17" height="14" viewBox="0 0 17 14"><rect x=".5" y=".5" width="16" height="13" fill="#f4f4f4" stroke="#c8d8f0"/><rect x="3.5" y="3.5" width="10" height="7" fill="none" stroke="#222" stroke-dasharray="2 1"/><rect x="2" y="2" width="3" height="3" fill="#222"/><rect x="12" y="2" width="3" height="3" fill="#222"/><rect x="2" y="9" width="3" height="3" fill="#222"/><rect x="12" y="9" width="3" height="3" fill="#222"/><path d="M1 1h15" stroke="#e04040"/></svg>
<div class="t " style="left:340px;top:209px;letter-spacing:-0.049px;color:#fff">FrmDemo</div>
<div class="a " style="left:1111px;top:216px;width:8px;height:1px;background:#fff"></div>
<div class="a " style="left:1130px;top:211px;width:10px;height:10px;border:1px solid #fff"></div>
<svg style="left:1150px;top:211px" width="10" height="10" viewBox="0 0 10 10"><path d="M.5 .5l9 9M9.5 .5l-9 9" stroke="#fff" stroke-width="1"/></svg>
<div class="a " style="left:316px;top:226px;width:850px;height:585px;background-color:#fff;background-image:radial-gradient(circle at .5px .5px,#111 .6px,transparent .9px);background-size:8px 8px;background-position:0 0"></div>
<div class="a " style="left:315px;top:205px;width:1px;height:607px;background:#0078d7"></div>
<div class="a " style="left:1165px;top:226px;width:1px;height:300px;background:#0078d7"></div>
<div class="a " style="left:1175px;top:206px;width:2px;height:320px;background:#18a0e0"></div>
<div class="a " style="left:317px;top:227px;width:305px;height:434px;background:#fff"></div>
<div class="a " style="left:618px;top:228px;width:1px;height:432px;background-image:linear-gradient(#111 1px,transparent 1px);background-size:1px 8px"></div>
<div class="t tah" style="left:318px;top:230px;line-height:16px;height:16px;letter-spacing:-0.226px;">RichEditInfo</div>
<div class="a " style="left:622px;top:229px;width:4.5px;height:431px;background:linear-gradient(90deg,#c6c6c6,#dadada 60%,#ececec)"></div>
<div class="t tah" style="left:630px;top:230px;line-height:16px;height:16px;letter-spacing:-0.021px;background:#fff;">Scan from path :</div><div class="a " style="left:634px;top:249px;width:420px;height:23px;background:#fff;border:1px solid #ececec;border-bottom:1px solid #7f7f7f;border-radius:3px"></div><div class="a " style="left:1060px;top:250px;width:21px;height:21px;background:#fbfbfb;border:1px solid #c9c9c9;border-radius:3px"></div><svg style="left:1063px;top:253px" width="15" height="15" viewBox="0 0 15 15"><rect x=".5" y=".5" width="14" height="14" fill="#fff" stroke="#2a55c0"/><rect x=".5" y=".5" width="14" height="3" fill="#2a55c0"/><path d="M3 6h4l1 1.2h4.5V13H3z" fill="#f7c948" stroke="#c88a10" stroke-width=".8"/><rect x="4.5" y="9" width="6.5" height="3" fill="#fbe08a"/></svg><div class="a " style="left:632px;top:282px;width:13px;height:13px;background:#1566c4;border-radius:3px"></div><svg style="left:632px;top:282px" width="13" height="13" viewBox="0 0 13 13"><path d="M3.2 6.6l2.4 2.4l4.4-4.8" fill="none" stroke="#fff" stroke-width="1.2"/></svg><div class="t tah" style="left:648px;top:281px;line-height:16px;height:16px;letter-spacing:-0.105px;background:#fff;">Include sub-directories</div><div class="t tah" style="left:774px;top:310px;line-height:16px;height:16px;letter-spacing:0.157px;background:#fff;">File Mask(s) :</div><div class="t tah" style="left:910px;top:310px;line-height:16px;height:16px;letter-spacing:-0.108px;background:#fff;">Exclude file mask(s) :</div><div class="a " style="left:630px;top:332px;width:13px;height:13px;background:#1566c4;border-radius:3px"></div><div class="a " style="left:634px;top:338px;width:5px;height:1px;background:#fff;opacity:.92"></div><div class="t tah" style="left:646px;top:331px;line-height:16px;height:16px;letter-spacing:-0.195px;background:#fff;">Archive</div><div class="a " style="left:630px;top:351px;width:13px;height:13px;background:#1566c4;border-radius:3px"></div><div class="a " style="left:634px;top:357px;width:5px;height:1px;background:#fff;opacity:.92"></div><div class="t tah" style="left:646px;top:350px;line-height:16px;height:16px;letter-spacing:-0.336px;background:#fff;">Hidden</div><div class="a " style="left:630px;top:370px;width:13px;height:13px;background:#1566c4;border-radius:3px"></div><div class="a " style="left:634px;top:376px;width:5px;height:1px;background:#fff;opacity:.92"></div><div class="t tah" style="left:646px;top:369px;line-height:16px;height:16px;letter-spacing:-0.118px;background:#fff;">Read Only</div><div class="a " style="left:630px;top:389px;width:13px;height:13px;background:#1566c4;border-radius:3px"></div><div class="a " style="left:634px;top:395px;width:5px;height:1px;background:#fff;opacity:.92"></div><div class="t tah" style="left:646px;top:388px;line-height:16px;height:16px;letter-spacing:-0.202px;background:#fff;">System</div><div class="a " style="left:630px;top:408px;width:13px;height:13px;background:#1566c4;border-radius:3px"></div><div class="a " style="left:634px;top:414px;width:5px;height:1px;background:#fff;opacity:.92"></div><div class="t tah" style="left:646px;top:407px;line-height:16px;height:16px;letter-spacing:0.186px;background:#fff;">Temporary</div><div class="a " style="left:774px;top:328px;width:125px;height:93px;background:#fff;border:1px solid #e6e6e6;border-bottom:1px solid #868686;border-radius:3px"></div><div class="t tah" style="left:778px;top:332px;line-height:16px;height:16px;letter-spacing:0.407px;">*.jpeg</div><div class="t tah" style="left:778px;top:348px;line-height:16px;height:16px;letter-spacing:0.369px;">*.jpg</div><div class="t tah" style="left:778px;top:364px;line-height:16px;height:16px;letter-spacing:0.25px;">*.exe</div><div class="t tah" style="left:778px;top:380px;line-height:16px;height:16px;letter-spacing:0.219px;">*.ico</div><div class="a " style="left:910px;top:328px;width:125px;height:93px;background:#fff;border:1px solid #e6e6e6;border-bottom:1px solid #868686;border-radius:3px"></div><div class="t tah" style="left:774px;top:428px;line-height:16px;height:16px;letter-spacing:-0.195px;background:#fff;">(Both masks can be empty)</div><div class="a " style="left:1064px;top:297px;width:85px;height:43px;background:#fbfbfb;border:1px solid #d0d0d0;border-bottom-color:#b8b8b8;border-radius:4px"></div><div class="t tah" style="left:1077px;top:311px;line-height:16px;height:16px;letter-spacing:-0.356px;">SBExecute</div><div class="a " style="left:1064px;top:353px;width:85px;height:36px;background:#fbfbfb;border:1px solid #d0d0d0;border-bottom-color:#b8b8b8;border-radius:4px"></div><div class="t tah" style="left:1082px;top:364px;line-height:16px;height:16px;letter-spacing:-0.03px;">SBPause</div><div class="a " style="left:1064px;top:409px;width:85px;height:38px;background:#fbfbfb;border:1px solid #d0d0d0;border-bottom-color:#b8b8b8;border-radius:4px"></div><div class="t tah" style="left:1078px;top:421px;line-height:16px;height:16px;letter-spacing:-0.089px;">SBResume</div>
<div class="a " style="left:387px;top:360px;width:29px;height:29px;background:#f3f3f3;border:1px solid #d0d0d0;border-right-color:#9a9a9a;border-bottom-color:#9a9a9a"></div>
<svg style="left:389px;top:362px" width="25" height="25" viewBox="0 0 25 25"><path d="M1 5h8l2 2h12v16H1z" fill="#e9a55a" stroke="#b06a20"/><rect x="2" y="9" width="20" height="13" fill="#f2bb7a"/><circle cx="12" cy="15" r="3.2" fill="#fff" stroke="#fff7e8" stroke-width="1.3"/><circle cx="12" cy="15" r="2.3" fill="#e9a55a"/><path d="M14.5 17.5l3 3" stroke="#fff" stroke-width="1.8"/><circle cx="20.5" cy="4.5" r="3.8" fill="#4aa0e8" stroke="#1e68b8" stroke-width=".8"/><circle cx="19.5" cy="3.5" r="1.3" fill="#cfe8ff"/></svg>
<div class="t " style="left:364px;top:394px;letter-spacing:-0.502px;background:#fff">cySearchFiles1</div>
<div class="a " style="left:316px;top:661px;width:90px;height:1px;background:#8a8a8a"></div>
<div class="a " style="left:316px;top:662px;width:90px;height:115px;background:#fff"></div>
<div class="a " style="left:317px;top:777px;width:90px;height:17px;background:#f0f0f0"></div>
<div class="a " style="left:335px;top:784px;width:72px;height:2px;background:#8a8a8a"></div>
<div class="a " style="left:316px;top:794px;width:90px;height:1px;background:#9a9a9a"></div>
<div class="a " style="left:316px;top:795px;width:90px;height:16px;background:#fff"></div>
<div class="t tah" style="left:316px;top:796px;line-height:16px;height:16px;letter-spacing:-0.5px;">Done.</div>
<div class="a " style="left:315px;top:811px;width:92px;height:1px;background:#0078d7"></div>
<div class="a " style="left:316px;top:812px;width:90px;height:9px;background:#fff"></div>
<div class="a " style="left:316px;top:821px;width:90px;height:2px;background:#18a0e0"></div>
<div class="a " style="left:305px;top:1006px;width:953px;height:14px;background:#f0f0f0"></div>
<div class="a " style="left:327px;top:1012px;width:80px;height:2px;background:#8a8a8a"></div>
<div class="a " style="left:308px;top:1023px;width:100px;height:20px;background:#f8f8f8;border:1px solid #e6e6e6;border-top:none"></div>
<svg style="left:313px;top:1024px" width="17" height="16" viewBox="0 0 17 16"><rect x="1.5" y="2.5" width="10" height="12" fill="#fbf6d0" stroke="#222"/><path d="M3 5h6M3 7h5M3 9h6M3 11h4" stroke="#2a8a6a"/><path d="M3 7h5M3 11h4" stroke="#c03030"/><path d="M8 9l6-7l1.6 1.4l-6 7l-2.4 1z" fill="#f2c12e" stroke="#a36b00" stroke-width=".6"/><path d="M13.4 1.6l2 1.8" stroke="#e03030" stroke-width="1.8"/></svg>
<div class="t " style="left:336px;top:1026px;letter-spacing:-0.284px;">Source Editor</div>
<div class="t " style="left:322px;top:1055px;white-space:pre">8:  2</div>
<div class="a " style="left:301px;top:1073px;width:981px;height:30px;background:#f0f0f0"></div>
<div class="a " style="left:306px;top:1077px;width:326px;height:23px;background:#fff;border:1px solid #7a7a7a;border-radius:3px"></div>
<div class="t " style="left:312px;top:1081px;color:#555">Search</div>
<svg style="left:617px;top:1084px" width="9" height="6" viewBox="0 0 9 6"><path d="M.5 .5l4 4l4-4" stroke="#333" fill="none"/></svg>
<div class="a " style="left:638px;top:1078px;width:47px;height:20px;background:#f1f1f1;border:1px solid #d2d2d2;border-radius:4px"></div>
<svg style="left:656px;top:1081px" width="11" height="11" viewBox="0 0 11 11"><path d="M3 0h5v5h3L5.5 11 0 5h3z" fill="#2d62b8"/></svg>
<div class="a " style="left:693px;top:1078px;width:47px;height:20px;background:#f1f1f1;border:1px solid #d2d2d2;border-radius:4px"></div>
<svg style="left:711px;top:1081px" width="11" height="11" viewBox="0 0 11 11"><path d="M3 11h5V6h3L5.5 0 0 6h3z" fill="#2d62b8"/></svg>
<div class="a " style="left:748px;top:1078px;width:47px;height:20px;background:#f1f1f1;border:1px solid #d2d2d2;border-radius:4px"></div>
<svg style="left:766px;top:1081px" width="11" height="11" viewBox="0 0 11 11"><path d="M0 0h11L5.5 7z" fill="#2d62b8"/><rect x="1" y="9" width="9" height="2" fill="#2d62b8"/></svg>
<div class="a " style="left:802px;top:1078px;width:47px;height:20px;background:#f1f1f1;border:1px solid #d2d2d2;border-radius:4px"></div>
<svg style="left:820px;top:1081px" width="11" height="11" viewBox="0 0 11 11"><path d="M0 11h11L5.5 4z" fill="#2d62b8"/><rect x="1" y="0" width="9" height="2" fill="#2d62b8"/></svg>
<div class="a " style="left:858px;top:1077px;width:22px;height:22px;background:#f1f1f1;border:1px solid #d2d2d2;border-radius:4px"></div>
<svg style="left:861px;top:1079px" width="16" height="16" viewBox="0 0 16 16"><path d="M12 1l2 2l-6 7l-2-2z" fill="#c89038"/><path d="M2 12l5-5l3 3l-4 5z" fill="#f2d048" stroke="#b08a10" stroke-width=".6"/></svg>
<div class="a " style="left:886px;top:1077px;width:22px;height:22px;background:#f1f1f1;border:1px solid #d2d2d2;border-radius:4px"></div>
<svg style="left:889px;top:1079px" width="16" height="16" viewBox="0 0 16 16"><circle cx="8" cy="8" r="5" fill="none" stroke="#777" stroke-width="2.4" stroke-dasharray="2 1.4"/><circle cx="8" cy="8" r="2.6" fill="#c05030"/><circle cx="8" cy="8" r="1.2" fill="#eee"/></svg>
<div class="t " style="left:920px;top:1081px;">0 / 0</div>
<div class="a " style="left:1255px;top:1078px;width:19px;height:19px;background:#f4f4f4;border:1px solid #c4c4c4;border-radius:3px"></div>
<svg style="left:1259px;top:1082px" width="11" height="11" viewBox="0 0 11 11"><path d="M1.5 1.5l8 8M9.5 1.5l-8 8" stroke="#d01818" stroke-width="2.6"/></svg>
<div class="a " style="left:286px;top:1104px;width:996px;height:1px;background:#fdfdfd"></div>
<div class="a " style="left:286px;top:1106px;width:996px;height:2px;background:#8e8e8e"></div>
<div class="a " style="left:286px;top:1108px;width:996px;height:143px;background:#f0f0f0"></div>
<div class="a " style="left:286px;top:1110px;width:16px;height:141px;background:#fffeac"></div>
<div class="a " style="left:286px;top:1109px;width:996px;height:1px;background:#9a9a9a"></div>
<svg style="left:291px;top:1115px" width="8" height="7" viewBox="0 0 8 7"><path d="M.5 0l7 7M7.5 0l-7 7" stroke="#000080" stroke-width="2"/></svg>
<svg style="left:291px;top:1129px" width="7" height="9" viewBox="0 0 7 9"><path d="M1.5 0h4v1h-1v3l1.5 1.500v.7H4v3L3.500 10L3 9.200v-3H0v-.7L1.500 4V1h-1z" fill="#333"/></svg>
<div class="t" style="left:293.5px;top:1197.5px;transform:translate(-50%,-50%) rotate(-90deg);letter-spacing:-0.461px;">Messages</div>
<div class="a " style="left:302px;top:1108px;width:980px;height:143px;background:#fff"></div>
<div class="a" style="left:302px;top:1126px;width:960px;height:6px;overflow:hidden"><div class="t" style="left:17px;top:-9px;color:#333;letter-spacing:-.08px">formcySearchFiles.pas(9,9) Hint: Unit "Messages" not used in formcySearchFiles</div></div>
<div class="a " style="left:302px;top:1111px;width:963px;height:16px;background:linear-gradient(#5de85d 0,#5ce95c 62%,#86cfd0 100%)"></div>
<div class="t " style="left:303px;top:1112px;letter-spacing:-0.096px;">...Compile Project, Target: C:\codetyphon\CodeOcean\pl_Cindy\samples\xbin\cySearchFilesDemo.exe: Success, Warnings: 1, Hints: 8</div>
<svg style="left:305px;top:1135px" width="12" height="12" viewBox="0 0 12 12"><path d="M3.500 .8h5q3 0 3 3v1q0 3-3 3H7.500L4 10.800l.6-3H3.500q-3 0-3-3v-1q0-3 3-3z" fill="#dbeaff" stroke="#2a7fe0" stroke-width="1.200"/></svg>
<div class="t " style="left:319px;top:1135px;letter-spacing:-0.16px;">formcySearchFiles.pas(10,32) Hint: Unit "cyBasePanel" not used in formcySearchFiles</div>
<svg style="left:305px;top:1152px" width="12" height="12" viewBox="0 0 12 12"><path d="M3.500 .8h5q3 0 3 3v1q0 3-3 3H7.500L4 10.800l.6-3H3.500q-3 0-3-3v-1q0-3 3-3z" fill="#dbeaff" stroke="#2a7fe0" stroke-width="1.200"/></svg>
<div class="t " style="left:319px;top:1152px;letter-spacing:-0.103px;">formcySearchFiles.pas(11,13) Hint: Unit "cySpeedButton" not used in formcySearchFiles</div>
<svg style="left:305px;top:1169px" width="12" height="12" viewBox="0 0 12 12"><path d="M3.500 .8h5q3 0 3 3v1q0 3-3 3H7.500L4 10.800l.6-3H3.500q-3 0-3-3v-1q0-3 3-3z" fill="#dbeaff" stroke="#2a7fe0" stroke-width="1.200"/></svg>
<div class="t " style="left:319px;top:1169px;letter-spacing:-0.146px;">formcySearchFiles.pas(11,40) Hint: Unit "cyBaseLabel" not used in formcySearchFiles</div>
<svg style="left:305px;top:1186px" width="12" height="12" viewBox="0 0 12 12"><path d="M3.500 .8h5q3 0 3 3v1q0 3-3 3H7.500L4 10.800l.6-3H3.500q-3 0-3-3v-1q0-3 3-3z" fill="#dbeaff" stroke="#2a7fe0" stroke-width="1.200"/></svg>
<div class="t " style="left:319px;top:1186px;letter-spacing:-0.091px;">formcySearchFiles.pas(11,53) Hint: Unit "cyHotLabel" not used in formcySearchFiles</div>
<svg style="left:305px;top:1203px" width="12" height="12" viewBox="0 0 12 12"><path d="M3.500 .8h5q3 0 3 3v1q0 3-3 3H7.500L4 10.800l.6-3H3.500q-3 0-3-3v-1q0-3 3-3z" fill="#dbeaff" stroke="#2a7fe0" stroke-width="1.200"/></svg>
<div class="t " style="left:319px;top:1203px;letter-spacing:-0.111px;">formcySearchFiles.pas(11,65) Hint: Unit "cyLabel" not used in formcySearchFiles</div>
<svg style="left:305px;top:1220px" width="12" height="12" viewBox="0 0 12 12"><path d="M3.500 .8h5q3 0 3 3v1q0 3-3 3H7.500L4 10.800l.6-3H3.500q-3 0-3-3v-1q0-3 3-3z" fill="#dbeaff" stroke="#2a7fe0" stroke-width="1.200"/></svg>
<div class="t " style="left:319px;top:1220px;letter-spacing:-0.146px;">formcySearchFiles.pas(12,19) Hint: Unit "cyBaseSpeedButton" not used in formcySearchFiles</div>
<svg style="left:304px;top:1238px" width="13" height="12" viewBox="0 0 13 12"><path d="M6.5 .8l5.800 10.400H.7z" fill="#f7c520" stroke="#b88a00" stroke-width=".8"/><rect x="6" y="4" width="1.200" height="4" fill="#222"/><rect x="6" y="9" width="1.200" height="1.200" fill="#222"/></svg>
<div class="t " style="left:320px;top:1237px;letter-spacing:-0.072px;">cySearchFilesDemo.ppr(17,15) Warning: Symbol "TApplication.MainFormOnTaskBar" is not portable</div>
<div class="a " style="left:1265px;top:1108px;width:17px;height:143px;background:#f0f0f0"></div>
<div class="a " style="left:1273px;top:1152px;width:2px;height:82px;background:#8a8a8a"></div>
<div class="a " style="left:1288px;top:44px;width:548px;height:31px;background:#f3f3f3;border-top-left-radius:8px"></div>
<svg style="left:1297px;top:50px" width="13.1" height="15" viewBox="0 0 14 16"><defs><linearGradient id="tg2" x1="0" y1="0" x2="0" y2="1"><stop offset="0" stop-color="#1a5cb4"/><stop offset=".18" stop-color="#2f7fdc"/><stop offset=".45" stop-color="#4b97ea"/><stop offset=".75" stop-color="#2a6cc8"/><stop offset="1" stop-color="#2b4c98"/></linearGradient></defs><path d="M0.600 1.600C2 0.100 12 0.100 13.600 1.400L12 4.800C12.200 6.500 12.900 8.500 12.600 10C11.500 11.800 8.500 13 6.600 14.600L5.600 15.700L5.300 13.400C6.200 12.300 7.200 11.600 8 10.800C5.500 8.500 2 5 0.600 1.600Z" fill="url(#tg2)"/><path d="M1 1.900C3.500 0.900 10.500 0.900 13.200 1.700" stroke="#154f9e" stroke-width="1.100" fill="none"/><path d="M4 5.200C6.500 4.400 9.500 4.500 11.500 5.200M6.500 8C8.500 7.500 10.500 7.600 12 8.200" stroke="#8cc2f6" stroke-width=".7" fill="none" opacity=".8"/></svg>
<div class="t " style="left:1318px;top:52px;letter-spacing:-0.28px;color:#959595">CodeOcean Examples</div>
<div class="a " style="left:1720px;top:58px;width:10px;height:1px;background:#8a8a8a"></div>
<div class="a " style="left:1766px;top:53px;width:10px;height:10px;border:1px solid #8a8a8a;border-radius:1px"></div>
<svg style="left:1812px;top:53px" width="10" height="10" viewBox="0 0 10 10"><path d="M0 0L10 10M10 0L0 10" stroke="#8a8a8a" stroke-width="1" fill="none"/></svg>
<div class="a " style="left:1288px;top:75px;width:548px;height:15px;background:#fffeac;border-bottom:1px solid #b9b98a"></div>
<svg style="left:1827px;top:79px" width="8" height="7" viewBox="0 0 8 7"><path d="M.5 0l7 7M7.5 0l-7 7" stroke="#000080" stroke-width="2"/></svg>
<svg style="left:1292px;top:96px" width="16" height="16" viewBox="0 0 16 16"><path d="M2.500 9.500C1 4 6 1 10 3.500L11.500 1.500L12.500 8L6.500 7L8.300 5.400C6 4.300 4 6 4.800 9z" fill="#2a6fe0" stroke="#1a4fb8" stroke-width=".5"/><path d="M13.500 6.500C15 12 10 15 6 12.500L4.500 14.500L3.500 8L9.500 9L7.700 10.600C10 11.700 12 10 11.200 7z" fill="#3f8df0" stroke="#1a4fb8" stroke-width=".5"/></svg>
<svg style="left:1315px;top:96px" width="16" height="16" viewBox="0 0 16 16"><path d="M0 10q2-3 4 0t4 0t4 0t4 0v6H0z" fill="#3f86d8"/><path d="M0 13q2-3 4 0t4 0t4 0t4 0" stroke="#9fc8f2" fill="none"/><path d="M13 1l2 1.500l-4 5l-2-1.500z" fill="#b87a30"/><path d="M4 9l5-3.500l3 2.500l-5 3z" fill="#f2d048" stroke="#b08a10" stroke-width=".6"/></svg>
<div class="a " style="left:1337px;top:94px;width:1px;height:21px;background:#a9a9a9"></div>
<svg style="left:1343px;top:96px" width="16" height="16" viewBox="0 0 16 16"><circle cx="5" cy="4.5" r="4" fill="url(#gY)" stroke="#b07a00" stroke-width=".9"/><path d="M2.2 4.1l3.6 0.4M5 1.2999999999999998l0.4 3.6M5.4 4.5l2.4 -2.0" stroke="#7a4a00" stroke-width=".7" fill="none" opacity=".75"/><circle cx="11" cy="11.5" r="4" fill="url(#gB)" stroke="#1e58a8" stroke-width=".9"/><path d="M9.2 9.5v3.2q1.4 1.2 2.0 -0.4M12.0 9.5q1.6 2.0 0 4" stroke="#fff" stroke-width=".9" fill="none" opacity=".9"/><path d="M10 2h4v4M14 2.500l-3 3" stroke="#e01010" stroke-width="1.600" fill="none"/><path d="M6 14H2v-4M2 13.500l3-3" stroke="#e01010" stroke-width="1.600" fill="none"/></svg>
<svg style="left:1366px;top:96px" width="16" height="16" viewBox="0 0 16 16"><path d="M1 6h5l1.500 1.500H14V15H1z" fill="#f5d9a0" stroke="#d8ae60"/><path d="M1.500 9.500h12" stroke="#fbeccb"/><circle cx="10.500" cy="4.500" r="3.700" fill="#fff" stroke="#e020a0" stroke-width="1.300"/><path d="M9.300 6.500v-4h1.500q1 0 1 1t-1 1h-1.500M10.800 4.500l1.200 2" stroke="#e020a0" stroke-width=".9" fill="none"/></svg>
<svg style="left:1389px;top:96px" width="16" height="16" viewBox="0 0 16 16"><circle cx="6" cy="6" r="5" fill="url(#gB)" stroke="#1e58a8" stroke-width=".9"/><path d="M3.75 3.5v4.0q1.75 1.5 2.5 -0.5M7.25 3.5q2.0 2.5 0 5" stroke="#fff" stroke-width=".9" fill="none" opacity=".9"/><path d="M7.5 6.5h4l3 3v5h-7z" fill="url(#gD)" stroke="#4d74b4" stroke-width="1"/><path d="M11.5 6.5v3h3" fill="none" stroke="#4d74b4" stroke-width=".7"/></svg>
<div class="a " style="left:1411px;top:94px;width:1px;height:21px;background:#a9a9a9"></div>
<svg style="left:1417px;top:96px" width="16" height="16" viewBox="0 0 16 16"><path d="M2 3h5v3H2zM2 8v5h4M2 10.500h4" fill="#2e76d6" stroke="#1e4fa0"/><rect x="6" y="9" width="4" height="2" fill="#2e76d6"/><rect x="6" y="12" width="4" height="2" fill="#2e76d6"/><path d="M9 1l6 6M15 1l-6 6" stroke="#e01010" stroke-width="2.200"/></svg>
<svg style="left:1440px;top:96px" width="16" height="16" viewBox="0 0 16 16"><circle cx="10" cy="6" r="5" fill="url(#gY)" stroke="#b07a00" stroke-width=".9"/><path d="M6.5 5.5l4.5 0.5M10 2.0l0.5 4.5M10.5 6l3.0 -2.5" stroke="#7a4a00" stroke-width=".7" fill="none" opacity=".75"/><path d="M1 9l4 -5l4 5h-2.5v4h-3v-4z" fill="#1fe04a" stroke="#053a0a" stroke-width=".8"/><rect x="0" y="14" width="10" height="1.3" fill="#1455c8"/></svg>
<svg style="left:1463px;top:96px" width="16" height="16" viewBox="0 0 16 16"><path d="M1 3h5l1.500 1.500H15V14H1z" fill="#f2c840" stroke="#c08a20"/><circle cx="8.5" cy="8.5" r="3" fill="#cfe6f7" stroke="#5f7d97" stroke-width="1.2"/><path d="M10.6 10.6l3.2 3.2" stroke="#6b7f90" stroke-width="2" stroke-linecap="round"/></svg>
<svg style="left:1486px;top:96px" width="16" height="16" viewBox="0 0 16 16"><rect x="2" y="3" width="5" height="12" rx="1.200" fill="#e9d8f5" stroke="#9040b8" stroke-width=".7"/><rect x="9" y="3" width="5" height="12" rx="1.200" fill="#e9d8f5" stroke="#9040b8" stroke-width=".7"/><rect x="2" y="3" width="5" height="3" fill="#a050c8"/><rect x="9" y="3" width="5" height="3" fill="#a050c8"/><rect x="2" y="12" width="5" height="3" fill="#a050c8"/><rect x="9" y="12" width="5" height="3" fill="#a050c8"/><rect x="3" y="1" width="3" height="2.500" fill="#8a3ab0"/><rect x="10" y="1" width="3" height="2.500" fill="#8a3ab0"/><rect x="6.500" y="7" width="3" height="3" fill="#b070d0"/></svg>
<svg style="left:1509px;top:96px" width="16" height="16" viewBox="0 0 16 16"><path d="M5.500 .5l5 5l-5 5l-5-5z" fill="#fff36a" stroke="#222" stroke-width=".9"/><rect x="4.900" y="2.500" width="1.300" height="1.300" fill="#111"/><rect x="4.900" y="4.500" width="1.300" height="3.500" fill="#111"/><rect x="8" y="8" width="7.500" height="7.500" fill="#5a58d0" stroke="#2a2890" stroke-width=".7"/><rect x="9.500" y="8.300" width="4.500" height="2.700" fill="#dcdcf8"/><rect x="10" y="12.500" width="3.500" height="3" fill="#2a2870"/></svg>
<div class="a " style="left:1290px;top:121px;width:490px;height:23px;background:#fff;border:1px solid #ececec;border-bottom:1px solid #7f7f7f;border-radius:3px"></div>
<div class="t " style="left:1293px;top:124px;letter-spacing:0.099px;">C:\codetyphon\CodeOcean</div>
<svg style="left:1786px;top:124px" width="16" height="15" viewBox="0 0 16 15"><rect x=".5" y=".5" width="15" height="14" fill="#fff" stroke="#2a55c0"/><rect x=".5" y=".5" width="15" height="3" fill="#2a55c0"/><path d="M3 6h4l1 1.200h4.500V13H3z" fill="#f7c948" stroke="#c88a10" stroke-width=".8"/></svg>
<svg style="left:1809px;top:124px" width="17" height="14" viewBox="0 0 16 16"><path d="M0 3.500q2-1.500 4 .5t4 1.500q2 0 4-1.500t4-.5v9q-2-1-4 .5t-4 1.500q-2 0-4-1.500t-4-.5z" fill="#3f86d8"/><path d="M0 6q2-1.500 4 0t4 1q2-.2 4-1t4 0M0 8.500q2-1.500 4 0t4 .6q2 0 4-.6t4 0M0 11q2-1.500 4 0t4 .2q2 0 4-.2t4 0" stroke="#cfe2f8" stroke-width=".7" fill="none"/></svg>
<div class="a " style="left:1290px;top:148px;width:152px;height:23px;background:#fff;border:1px solid #ececec;border-bottom:1px solid #7f7f7f;border-radius:3px"></div>
<div class="t " style="left:1293px;top:152px;letter-spacing:0.059px;">pl_cindy</div>
<svg style="left:1449px;top:152px" width="18" height="15" viewBox="0 0 18 15"><path d="M1 1h11l-4 5v7h-3v-7z" fill="#fff3b0" stroke="#d8a000" stroke-width="1"/><path d="M10.500 8.500l5 5M15.500 8.500l-5 5" stroke="#e01010" stroke-width="1.800"/></svg>
<svg style="left:1296px;top:182px" width="14" height="14" viewBox="0 0 14 14"><circle cx="7" cy="7" r="6" fill="url(#gY)" stroke="#b07a00" stroke-width=".9"/><path d="M2.8000000000000007 6.4l5.4 0.6000000000000001M7 2.1999999999999993l0.6000000000000001 5.4M7.6 7l3.5999999999999996 -3.0" stroke="#7a4a00" stroke-width=".7" fill="none" opacity=".75"/><path d="M7 7l-3-3M7 7l3-2M7 7v4" stroke="#b07a00" stroke-width=".8"/></svg>
<div class="t " style="left:1318px;top:183px;letter-spacing:-0.164px;">Visible Projects : 48/4117</div>
<div class="a " style="left:1288px;top:208px;width:548px;height:988px;background:#fff;border-top:1px solid #8a8a8a;overflow:hidden"></div>
<div class="t " style="left:1292px;top:211px;letter-spacing:0.149px;">C:\codetyphon\CodeOcean\pl_Cindy\samples\cyAdvButton\cyAdvButtonDemo.ctpr</div>
<div class="t " style="left:1292px;top:226px;letter-spacing:0.055px;">C:\codetyphon\CodeOcean\pl_Cindy\samples\cyAdvFlowPanel\cyAdvFlowPanelDemo.ctpr</div>
<div class="t " style="left:1292px;top:241px;letter-spacing:0.046px;">C:\codetyphon\CodeOcean\pl_Cindy\samples\cyAdvGridPanel\cyAdvGridPanelDemo.ctpr</div>
<div class="t " style="left:1292px;top:256px;letter-spacing:0.092px;">C:\codetyphon\CodeOcean\pl_Cindy\samples\cyAdvLed\cyAdvLedDemo.ctpr</div>
<div class="t " style="left:1292px;top:271px;letter-spacing:0.057px;">C:\codetyphon\CodeOcean\pl_Cindy\samples\cyAdvPaintBox\cyAdvPaintBoxDemo.ctpr</div>
<div class="t " style="left:1292px;top:286px;letter-spacing:0.071px;">C:\codetyphon\CodeOcean\pl_Cindy\samples\cyAdvPanel\cyAdvPanelDemo.ctpr</div>
<div class="t " style="left:1292px;top:301px;letter-spacing:0.107px;">C:\codetyphon\CodeOcean\pl_Cindy\samples\cyAdvProgressionPanel\cyAdvProgressionPanelDemo.ctpr</div>
<div class="t " style="left:1292px;top:316px;letter-spacing:0.068px;">C:\codetyphon\CodeOcean\pl_Cindy\samples\cyAdvSpeedButton\cyAdvSpeedButtonDemo.ctpr</div>
<div class="t " style="left:1292px;top:331px;letter-spacing:0.079px;">C:\codetyphon\CodeOcean\pl_Cindy\samples\cyAdvStaticText\cyAdvStaticTextDemo.ctpr</div>
<div class="t " style="left:1292px;top:346px;letter-spacing:0.057px;">C:\codetyphon\CodeOcean\pl_Cindy\samples\cyBevel\cyBevelDemo.ctpr</div>
<div class="t " style="left:1292px;top:361px;letter-spacing:0.115px;">C:\codetyphon\CodeOcean\pl_Cindy\samples\cyBitBtn\cyBitBtnDemo.ctpr</div>
<div class="t " style="left:1292px;top:376px;letter-spacing:0.112px;">C:\codetyphon\CodeOcean\pl_Cindy\samples\cyBook\cyBookDemo.ctpr</div>
<div class="t " style="left:1292px;top:391px;letter-spacing:0.033px;">C:\codetyphon\CodeOcean\pl_Cindy\samples\cyCheckBox\cyCheckBoxDemo.ctpr</div>
<div class="t " style="left:1292px;top:406px;letter-spacing:0.096px;">C:\codetyphon\CodeOcean\pl_Cindy\samples\cyColorGrid\cyColorGridDemo.ctpr</div>
<div class="t " style="left:1292px;top:421px;letter-spacing:0.117px;">C:\codetyphon\CodeOcean\pl_Cindy\samples\cyColorMatrix\cyColorMatrixDemo.ctpr</div>
<div class="t " style="left:1292px;top:436px;letter-spacing:0.099px;">C:\codetyphon\CodeOcean\pl_Cindy\samples\cyComboBox\cyComboBoxDemo.ctpr</div>
<div class="t " style="left:1292px;top:451px;letter-spacing:0.108px;">C:\codetyphon\CodeOcean\pl_Cindy\samples\cyDebug\cyDebugDemo.ctpr</div>
<div class="t " style="left:1292px;top:466px;letter-spacing:0.11px;">C:\codetyphon\CodeOcean\pl_Cindy\samples\cyEditComp\cyEditDemo.ctpr</div>
<div class="t " style="left:1292px;top:481px;letter-spacing:0.05px;">C:\codetyphon\CodeOcean\pl_Cindy\samples\cyFlowPanel\cyFlowPanelDemo.ctpr</div>
<div class="t " style="left:1292px;top:496px;letter-spacing:0.09px;">C:\codetyphon\CodeOcean\pl_Cindy\samples\cyFlyingContainer\cyFlyingContainerDemo.ctpr</div>
<div class="t " style="left:1292px;top:511px;letter-spacing:0.041px;">C:\codetyphon\CodeOcean\pl_Cindy\samples\cyGridPanel\cyGridPanelDemo.ctpr</div>
<div class="t " style="left:1292px;top:526px;letter-spacing:0.104px;">C:\codetyphon\CodeOcean\pl_Cindy\samples\cyHotLabel\cyHotLabelDemo.ctpr</div>
<div class="t " style="left:1292px;top:541px;letter-spacing:0.105px;">C:\codetyphon\CodeOcean\pl_Cindy\samples\cyImage\cyImageDemo.ctpr</div>
<div class="t " style="left:1292px;top:556px;letter-spacing:0.122px;">C:\codetyphon\CodeOcean\pl_Cindy\samples\cyIniForm\cyIniFormDemo.ctpr</div>
<div class="t " style="left:1292px;top:571px;letter-spacing:0.077px;">C:\codetyphon\CodeOcean\pl_Cindy\samples\cyLabel\cyLabelDemo.ctpr</div>
<div class="t " style="left:1292px;top:586px;letter-spacing:0.093px;">C:\codetyphon\CodeOcean\pl_Cindy\samples\cyLed\cyLedDemo.ctpr</div>
<div class="t " style="left:1292px;top:601px;letter-spacing:0.067px;">C:\codetyphon\CodeOcean\pl_Cindy\samples\cyMaskEdit\cyMaskEditDemo.ctpr</div>
<div class="t " style="left:1292px;top:616px;letter-spacing:0.047px;">C:\codetyphon\CodeOcean\pl_Cindy\samples\cyMathParser\cyMathParserDemo.ctpr</div>
<div class="t " style="left:1292px;top:631px;letter-spacing:0.122px;">C:\codetyphon\CodeOcean\pl_Cindy\samples\cyModalContainer\cyModalContainerDemo.ctpr</div>
<div class="t " style="left:1292px;top:646px;letter-spacing:0.052px;">C:\codetyphon\CodeOcean\pl_Cindy\samples\cyNavPanel\cyNavPanelDemo.ctpr</div>
<div class="t " style="left:1292px;top:661px;letter-spacing:0.082px;">C:\codetyphon\CodeOcean\pl_Cindy\samples\cyPageControl\cyPageControlDemo.ctpr</div>
<div class="t " style="left:1292px;top:676px;letter-spacing:0.052px;">C:\codetyphon\CodeOcean\pl_Cindy\samples\cyPaintBox\cyPaintBoxDemo.ctpr</div>
<div class="t " style="left:1292px;top:691px;letter-spacing:0.067px;">C:\codetyphon\CodeOcean\pl_Cindy\samples\cyPanel\cyPanelDemo.ctpr</div>
<div class="t " style="left:1292px;top:706px;letter-spacing:0.003px;">C:\codetyphon\CodeOcean\pl_Cindy\samples\cyProgressionPanel\cyProgressionPanelDemo.ctpr</div>
<div class="t " style="left:1292px;top:721px;letter-spacing:0.058px;">C:\codetyphon\CodeOcean\pl_Cindy\samples\cyRadioGroup\cyRadioGroupDemo.ctpr</div>
<div class="t " style="left:1292px;top:736px;letter-spacing:-0.024px;">C:\codetyphon\CodeOcean\pl_Cindy\samples\cyResizer\cyResizerDemo.ctpr</div>
<div class="t " style="left:1292px;top:751px;letter-spacing:-0.026px;">C:\codetyphon\CodeOcean\pl_Cindy\samples\cyRunTimeResize\cyRunTimeResizeDemo.ctpr</div>
<div class="t " style="left:1292px;top:766px;letter-spacing:0.046px;">C:\codetyphon\CodeOcean\pl_Cindy\samples\cyScrollBox\cyScrollboxDemo.ctpr</div>
<div class="a " style="left:1289px;top:780px;width:547px;height:15px;background:#0078d7"></div>
<div class="t " style="left:1292px;top:781px;letter-spacing:-0.039px;color:#fff">C:\codetyphon\CodeOcean\pl_Cindy\samples\cySearchFiles\cySearchFilesDemo.ctpr</div>
<div class="t " style="left:1292px;top:796px;letter-spacing:0.03px;">C:\codetyphon\CodeOcean\pl_Cindy\samples\cySimpleGauge\cySimpleGaugeDemo.ctpr</div>
<div class="t " style="left:1292px;top:811px;letter-spacing:0.033px;">C:\codetyphon\CodeOcean\pl_Cindy\samples\cySkinArea\cySkinAreaDemo.ctpr</div>
<div class="t " style="left:1292px;top:826px;letter-spacing:0.103px;">C:\codetyphon\CodeOcean\pl_Cindy\samples\cySkinButton\cySkinButtonDemo.ctpr</div>
<div class="t " style="left:1292px;top:841px;letter-spacing:0.065px;">C:\codetyphon\CodeOcean\pl_Cindy\samples\cySpeedButton\cySpeedButtonDemo.ctpr</div>
<div class="t " style="left:1292px;top:856px;letter-spacing:0.099px;">C:\codetyphon\CodeOcean\pl_Cindy\samples\cySplitter\cySplitterDemo.ctpr</div>
<div class="t " style="left:1292px;top:871px;letter-spacing:0.076px;">C:\codetyphon\CodeOcean\pl_Cindy\samples\cyStaticText\cyStaticTextDemo.ctpr</div>
<div class="t " style="left:1292px;top:886px;letter-spacing:0.005px;">C:\codetyphon\CodeOcean\pl_Cindy\samples\cyStatusBar\cyStatusBarDemo.ctpr</div>
<div class="t " style="left:1292px;top:901px;letter-spacing:0.153px;">C:\codetyphon\CodeOcean\pl_Cindy\samples\cyTabControl\cyTabControlDemo.ctpr</div>
<div class="t " style="left:1292px;top:916px;letter-spacing:0.088px;">C:\codetyphon\CodeOcean\pl_Cindy\samples\cyVirtualGrid\cyVirtualGridDemo.ctpr</div>
<div class="a " style="left:1288px;top:1178px;width:548px;height:17px;background:#f0f0f0"></div>
<div class="a " style="left:1307px;top:1185px;width:282px;height:2px;background:#7c7c7c"></div>
<div class="a " style="left:1289px;top:1195px;width:547px;height:1px;background:#8a8a8a"></div>
<div class="a " style="left:1289px;top:1199px;width:547px;height:1px;background:#8a8a8a"></div>
<div class="a " style="left:1550.0px;top:1197px;width:2px;height:1px;background:#b5b5b5"></div>
<div class="a " style="left:1553.5px;top:1197px;width:2px;height:1px;background:#b5b5b5"></div>
<div class="a " style="left:1557.0px;top:1197px;width:2px;height:1px;background:#b5b5b5"></div>
<div class="a " style="left:1560.5px;top:1197px;width:2px;height:1px;background:#b5b5b5"></div>
<div class="a " style="left:1564.0px;top:1197px;width:2px;height:1px;background:#b5b5b5"></div>
<div class="a " style="left:1567.5px;top:1197px;width:2px;height:1px;background:#b5b5b5"></div>
<div class="a " style="left:1571.0px;top:1197px;width:2px;height:1px;background:#b5b5b5"></div>
<div class="a " style="left:1574.5px;top:1197px;width:2px;height:1px;background:#b5b5b5"></div>
<div class="a " style="left:1291px;top:1206px;width:529px;height:26px;background:#fff"></div>
<div class="a " style="left:1291px;top:1232px;width:545px;height:17px;background:#f0f0f0"></div>
<div class="a " style="left:1820px;top:1206px;width:16px;height:26px;background:#f0f0f0"></div>
<svg style="left:1823px;top:1210px" width="9" height="7" viewBox="0 0 9 7"><path d="M0 7h9L4.500 0z" fill="#a8a8a8"/></svg>
<svg style="left:1823px;top:1222px" width="9" height="7" viewBox="0 0 9 7"><path d="M0 0h9L4.500 7z" fill="#a8a8a8"/></svg>
<svg style="left:1297px;top:1236px" width="7" height="9" viewBox="0 0 7 9"><path d="M7 0v9L0 4.500z" fill="#a8a8a8"/></svg>
<svg style="left:1807px;top:1236px" width="7" height="9" viewBox="0 0 7 9"><path d="M0 0v9l7-4.500z" fill="#a8a8a8"/></svg>
<div class="a " style="left:1826px;top:1246px;width:2px;height:2px;background:#b0b0b0"></div>
<div class="a " style="left:1829px;top:1246px;width:2px;height:2px;background:#b0b0b0"></div>
<div class="a " style="left:1832px;top:1246px;width:2px;height:2px;background:#b0b0b0"></div>
<div class="a " style="left:1829px;top:1243px;width:2px;height:2px;background:#b0b0b0"></div>
<div class="a " style="left:1832px;top:1243px;width:2px;height:2px;background:#b0b0b0"></div>
<div class="a " style="left:1832px;top:1240px;width:2px;height:2px;background:#b0b0b0"></div>
<div class="a " style="left:1289px;top:1249px;width:547px;height:2px;background:#8a8a8a"></div>
<div class="a " style="left:402px;top:458px;width:849px;height:615px;background:#fff;border-radius:8px;box-shadow:0 0 0 1px rgba(80,80,80,.45),0 14px 30px 2px rgba(0,0,0,.42),0 2px 10px rgba(0,0,0,.12);overflow:hidden"><div class="a " style="left:0px;top:0px;width:849px;height:30px;background:#f0f2f8"></div></div>
<svg style="left:412px;top:465px" width="12.7" height="14.5" viewBox="0 0 14 16"><defs><linearGradient id="tg3" x1="0" y1="0" x2="0" y2="1"><stop offset="0" stop-color="#1a5cb4"/><stop offset=".18" stop-color="#2f7fdc"/><stop offset=".45" stop-color="#4b97ea"/><stop offset=".75" stop-color="#2a6cc8"/><stop offset="1" stop-color="#2b4c98"/></linearGradient></defs><path d="M0.600 1.600C2 0.100 12 0.100 13.600 1.400L12 4.800C12.200 6.500 12.900 8.500 12.600 10C11.500 11.800 8.500 13 6.600 14.600L5.600 15.700L5.300 13.400C6.200 12.300 7.200 11.600 8 10.800C5.500 8.500 2 5 0.600 1.600Z" fill="url(#tg3)"/><path d="M1 1.900C3.500 0.900 10.500 0.900 13.200 1.700" stroke="#154f9e" stroke-width="1.100" fill="none"/><path d="M4 5.200C6.500 4.400 9.500 4.500 11.500 5.200M6.500 8C8.500 7.500 10.500 7.600 12 8.200" stroke="#8cc2f6" stroke-width=".7" fill="none" opacity=".8"/></svg>
<div class="t " style="left:432px;top:466px;letter-spacing:-0.299px;">CySearchFiles demo</div>
<div class="a " style="left:1132px;top:472px;width:10px;height:1px;background:#111"></div>
<div class="a " style="left:1177px;top:467px;width:10px;height:10px;border:1px solid #111;border-radius:1.5px"></div>
<svg style="left:1223px;top:467px" width="10" height="10" viewBox="0 0 10 10"><path d="M.3 .3l9.4 9.4M9.7 .3l-9.4 9.4" stroke="#111" stroke-width="1.1"/></svg>
<div class="t tah" style="left:404px;top:491px;line-height:16px;height:16px;letter-spacing:0.009px;white-space:pre">The TcySearchFiles component</div>
<div class="t tah" style="left:404px;top:523px;line-height:16px;height:16px;letter-spacing:-0.017px;white-space:pre">Search files from a directory.</div>
<div class="t tah" style="left:404px;top:555px;line-height:16px;height:16px;letter-spacing:-0.134px;white-space:pre">Published properties</div>
<div class="t tah" style="left:404px;top:571px;line-height:16px;height:16px;letter-spacing:-0.015px;white-space:pre">- FileAttributes: TcyFileAttributes - specify files</div>
<div class="t tah" style="left:404px;top:587px;line-height:16px;height:16px;letter-spacing:-0.123px;white-space:pre">attributes for search.</div>
<div class="t tah" style="left:404px;top:603px;line-height:16px;height:16px;letter-spacing:0.023px;white-space:pre">- MaskInclude: TStrings</div>
<div class="t tah" style="left:404px;top:619px;line-height:16px;height:16px;letter-spacing:-0.029px;white-space:pre">- MaskExclude: TStrings</div>
<div class="t tah" style="left:404px;top:635px;line-height:16px;height:16px;letter-spacing:0.053px;white-space:pre">- FromPath: String - source path</div>
<div class="t tah" style="left:404px;top:651px;line-height:16px;height:16px;letter-spacing:-0.036px;white-space:pre">- Options: TOptions - search options</div>
<div class="t tah" style="left:404px;top:667px;line-height:16px;height:16px;letter-spacing:-0.088px;white-space:pre">- SubDirectories: boolean - specify if subdirectories</div>
<div class="t tah" style="left:404px;top:683px;line-height:16px;height:16px;letter-spacing:-0.089px;white-space:pre">will be processed or not.</div>
<div class="t tah" style="left:404px;top:699px;line-height:16px;height:16px;letter-spacing:-0.005px;white-space:pre">- ActiveSearchRec: TSearchRecInstance - current</div>
<div class="t tah" style="left:404px;top:715px;line-height:16px;height:16px;letter-spacing:-0.087px;white-space:pre">TSearchRecInstance with state and process</div>
<div class="t tah" style="left:404px;top:731px;line-height:16px;height:16px;letter-spacing:-0.067px;white-space:pre">properties</div>
<div class="t tah" style="left:404px;top:747px;line-height:16px;height:16px;letter-spacing:0.002px;white-space:pre">- Aborted: boolean</div>
<div class="t tah" style="left:404px;top:763px;line-height:16px;height:16px;letter-spacing:0.024px;white-space:pre">- CurrentFileName: String</div>
<div class="t tah" style="left:404px;top:779px;line-height:16px;height:16px;letter-spacing:-0.013px;white-space:pre">- CurrentDirectory: String</div>
<div class="t tah" style="left:404px;top:795px;line-height:16px;height:16px;letter-spacing:-0.076px;white-space:pre">- MatchedDirectories: Integer - current number of</div>
<div class="t tah" style="left:404px;top:811px;line-height:16px;height:16px;letter-spacing:-0.173px;white-space:pre">directories matched</div>
<div class="t tah" style="left:404px;top:827px;line-height:16px;height:16px;letter-spacing:-0.023px;white-space:pre">- MatchedFiles: Integer  - current number of files</div>
<div class="t tah" style="left:404px;top:843px;line-height:16px;height:16px;letter-spacing:-0.232px;white-space:pre">matched</div>
<div class="t tah" style="left:404px;top:859px;line-height:16px;height:16px;letter-spacing:0.012px;white-space:pre">- SearchState: TSearchState - state of file search</div>
<div class="t tah" style="left:404px;top:875px;line-height:16px;height:16px;letter-spacing:-0.064px;white-space:pre">idle, paused, searching etc ...)</div>
<div class="t tah" style="left:404px;top:907px;line-height:16px;height:16px;letter-spacing:-0.268px;white-space:pre">Events</div>
<div class="a " style="left:708px;top:489px;width:5px;height:432px;background:linear-gradient(90deg,#c6c6c6,#dadada 60%,#ececec)"></div>
<div class="a " style="left:709px;top:695px;width:1px;height:1px;background:#888"></div>
<div class="a " style="left:709px;top:697px;width:1px;height:1px;background:#888"></div>
<div class="a " style="left:709px;top:699px;width:1px;height:1px;background:#888"></div>
<div class="a " style="left:709px;top:701px;width:1px;height:1px;background:#888"></div>
<div class="a " style="left:709px;top:703px;width:1px;height:1px;background:#888"></div>
<div class="a " style="left:709px;top:705px;width:1px;height:1px;background:#888"></div>
<div class="a " style="left:709px;top:707px;width:1px;height:1px;background:#888"></div>
<div class="a " style="left:709px;top:709px;width:1px;height:1px;background:#888"></div>
<div class="a " style="left:709px;top:711px;width:1px;height:1px;background:#888"></div>
<div class="a " style="left:709px;top:713px;width:1px;height:1px;background:#888"></div>
<div class="a " style="left:709px;top:715px;width:1px;height:1px;background:#888"></div>
<div class="t tah" style="left:716px;top:492px;line-height:16px;height:16px;letter-spacing:-0.021px;">Scan from path :</div><div class="a " style="left:720px;top:511px;width:420px;height:23px;background:#fff;border:1px solid #ececec;border-bottom:1px solid #7f7f7f;border-radius:3px"></div><div class="t tah" style="left:724px;top:514px;line-height:16px;height:16px;letter-spacing:-0.126px;">C:\codetyphon\CodeOcean\pl_Cindy\samples\xbin</div><div class="a " style="left:1146px;top:512px;width:21px;height:21px;background:#fbfbfb;border:1px solid #c9c9c9;border-radius:3px"></div><svg style="left:1149px;top:515px" width="15" height="15" viewBox="0 0 15 15"><rect x=".5" y=".5" width="14" height="14" fill="#fff" stroke="#2a55c0"/><rect x=".5" y=".5" width="14" height="3" fill="#2a55c0"/><path d="M3 6h4l1 1.2h4.5V13H3z" fill="#f7c948" stroke="#c88a10" stroke-width=".8"/><rect x="4.5" y="9" width="6.5" height="3" fill="#fbe08a"/></svg><div class="a " style="left:718px;top:544px;width:13px;height:13px;background:#1566c4;border-radius:3px"></div><svg style="left:718px;top:544px" width="13" height="13" viewBox="0 0 13 13"><path d="M3.2 6.6l2.4 2.4l4.4-4.8" fill="none" stroke="#fff" stroke-width="1.2"/></svg><div class="t tah" style="left:734px;top:543px;line-height:16px;height:16px;letter-spacing:-0.105px;">Include sub-directories</div><div class="t tah" style="left:860px;top:572px;line-height:16px;height:16px;letter-spacing:0.157px;">File Mask(s) :</div><div class="t tah" style="left:996px;top:572px;line-height:16px;height:16px;letter-spacing:-0.108px;">Exclude file mask(s) :</div><div class="a " style="left:716px;top:594px;width:13px;height:13px;background:#1566c4;border-radius:3px"></div><div class="a " style="left:720px;top:600px;width:5px;height:1px;background:#fff;opacity:.92"></div><div class="t tah" style="left:732px;top:593px;line-height:16px;height:16px;letter-spacing:-0.195px;">Archive</div><div class="a " style="left:716px;top:613px;width:13px;height:13px;background:#1566c4;border-radius:3px"></div><div class="a " style="left:720px;top:619px;width:5px;height:1px;background:#fff;opacity:.92"></div><div class="t tah" style="left:732px;top:612px;line-height:16px;height:16px;letter-spacing:-0.336px;">Hidden</div><div class="a " style="left:716px;top:632px;width:13px;height:13px;background:#1566c4;border-radius:3px"></div><div class="a " style="left:720px;top:638px;width:5px;height:1px;background:#fff;opacity:.92"></div><div class="t tah" style="left:732px;top:631px;line-height:16px;height:16px;letter-spacing:-0.118px;">Read Only</div><div class="a " style="left:716px;top:651px;width:13px;height:13px;background:#1566c4;border-radius:3px"></div><div class="a " style="left:720px;top:657px;width:5px;height:1px;background:#fff;opacity:.92"></div><div class="t tah" style="left:732px;top:650px;line-height:16px;height:16px;letter-spacing:-0.202px;">System</div><div class="a " style="left:716px;top:670px;width:13px;height:13px;background:#1566c4;border-radius:3px"></div><div class="a " style="left:720px;top:676px;width:5px;height:1px;background:#fff;opacity:.92"></div><div class="t tah" style="left:732px;top:669px;line-height:16px;height:16px;letter-spacing:0.186px;">Temporary</div><div class="a " style="left:860px;top:590px;width:125px;height:93px;background:#fff;border:1px solid #e6e6e6;border-bottom:1px solid #868686;border-radius:3px"></div><div class="t tah" style="left:864px;top:594px;line-height:16px;height:16px;letter-spacing:0.407px;">*.jpeg</div><div class="t tah" style="left:864px;top:610px;line-height:16px;height:16px;letter-spacing:0.369px;">*.jpg</div><div class="t tah" style="left:864px;top:626px;line-height:16px;height:16px;letter-spacing:0.25px;">*.exe</div><div class="t tah" style="left:864px;top:642px;line-height:16px;height:16px;letter-spacing:0.219px;">*.ico</div><div class="a " style="left:996px;top:590px;width:125px;height:93px;background:#fff;border:1px solid #e6e6e6;border-bottom:1px solid #868686;border-radius:3px"></div><div class="t tah" style="left:860px;top:690px;line-height:16px;height:16px;letter-spacing:-0.195px;">(Both masks can be empty)</div><div class="a " style="left:1150px;top:559px;width:85px;height:43px;background:#fbfbfb;border:1px solid #d0d0d0;border-bottom-color:#b8b8b8;border-radius:4px"></div><div class="t tah" style="left:1163px;top:573px;line-height:16px;height:16px;letter-spacing:-0.356px;">SBExecute</div><div class="a " style="left:1150px;top:615px;width:85px;height:36px;background:#fbfbfb;border:1px solid #d0d0d0;border-bottom-color:#b8b8b8;border-radius:4px"></div><div class="t tah" style="left:1168px;top:626px;line-height:16px;height:16px;letter-spacing:-0.03px;">SBPause</div><div class="a " style="left:1150px;top:671px;width:85px;height:38px;background:#fbfbfb;border:1px solid #d0d0d0;border-bottom-color:#b8b8b8;border-radius:4px"></div><div class="t tah" style="left:1164px;top:683px;line-height:16px;height:16px;letter-spacing:-0.089px;">SBResume</div>
<div class="a " style="left:1150px;top:727px;width:85px;height:31px;background:#fbfbfb;border:1px solid #d0d0d0;border-bottom-color:#b8b8b8;border-radius:4px"></div><div class="t tah" style="left:1169px;top:735px;line-height:16px;height:16px;letter-spacing:-0.132px;">SBAbort</div>
<div class="a " style="left:1129px;top:807px;width:109px;height:54px;background:#fbfbfb;border:1px solid #d0d0d0;border-bottom-color:#b8b8b8;border-radius:4px"></div><div class="t tah" style="left:1160px;top:827px;line-height:16px;height:16px;letter-spacing:-0.156px;">SBClose</div>
<div class="a " style="left:718px;top:732px;width:403px;height:177px;border:1px solid #dcdcdc"></div>
<div class="t tah" style="left:727px;top:725px;line-height:16px;height:16px;letter-spacing:-0.09px;background:#fff;white-space:pre"> Personalize result with OnValidateFile Event </div>
<div class="t tah" style="left:750px;top:770px;line-height:16px;height:16px;letter-spacing:-0.274px;">Modified Date &gt;</div>
<div class="a " style="left:866px;top:743px;width:225px;height:160px;background:#fff;border:1px solid #8c8c8c"></div>
<svg style="left:875px;top:757px" width="4.5" height="8" viewBox="0 0 4.5 8"><path d="M4.500 0v8L0 4z" fill="#111"/></svg>
<svg style="left:1078.5px;top:757px" width="4.5" height="8" viewBox="0 0 4.5 8"><path d="M0 0v8l4.500-4z" fill="#111"/></svg>
<div class="t " style="left:952.5px;top:755px;letter-spacing:-0.405px;">June 2011</div>
<div class="t " style="left:869.5px;width:31px;text-align:center;top:777px;">Sun</div>
<div class="t " style="left:900.5px;width:31px;text-align:center;top:777px;">Mon</div>
<div class="t " style="left:931.5px;width:31px;text-align:center;top:777px;">Tue</div>
<div class="t " style="left:962.5px;width:31px;text-align:center;top:777px;">Wed</div>
<div class="t " style="left:993.5px;width:31px;text-align:center;top:777px;">Thu</div>
<div class="t " style="left:1024.5px;width:31px;text-align:center;top:777px;">Fri</div>
<div class="t " style="left:1055.5px;width:31px;text-align:center;top:777px;">Sat</div>
<div class="a " style="left:872px;top:791px;width:212px;height:1px;background:#e4e4e4"></div>
<div class="a " style="left:870px;top:823px;width:31px;height:14px;background:#cdcdcd;border:1px solid #8c8c8c"></div>
<div class="t" style="left:862px;width:30.5px;text-align:right;top:793px;color:#6d6d6d;letter-spacing:-.2px">29</div>
<div class="t" style="left:893px;width:30.5px;text-align:right;top:793px;color:#6d6d6d;letter-spacing:-.2px">30</div>
<div class="t" style="left:924px;width:30.5px;text-align:right;top:793px;color:#6d6d6d;letter-spacing:-.2px">31</div>
<div class="t" style="left:955px;width:30.5px;text-align:right;top:793px;color:#000;letter-spacing:-.2px">1</div>
<div class="t" style="left:986px;width:30.5px;text-align:right;top:793px;color:#000;letter-spacing:-.2px">2</div>
<div class="t" style="left:1017px;width:30.5px;text-align:right;top:793px;color:#000;letter-spacing:-.2px">3</div>
<div class="t" style="left:1048px;width:30.5px;text-align:right;top:793px;color:#000;letter-spacing:-.2px">4</div>
<div class="t" style="left:862px;width:30.5px;text-align:right;top:808px;color:#000;letter-spacing:-.2px">5</div>
<div class="t" style="left:893px;width:30.5px;text-align:right;top:808px;color:#000;letter-spacing:-.2px">6</div>
<div class="t" style="left:924px;width:30.5px;text-align:right;top:808px;color:#000;letter-spacing:-.2px">7</div>
<div class="t" style="left:955px;width:30.5px;text-align:right;top:808px;color:#000;letter-spacing:-.2px">8</div>
<div class="t" style="left:986px;width:30.5px;text-align:right;top:808px;color:#000;letter-spacing:-.2px">9</div>
<div class="t" style="left:1017px;width:30.5px;text-align:right;top:808px;color:#000;letter-spacing:-.2px">10</div>
<div class="t" style="left:1048px;width:30.5px;text-align:right;top:808px;color:#000;letter-spacing:-.2px">11</div>
<div class="t" style="left:862px;width:30.5px;text-align:right;top:823px;color:#000;letter-spacing:-.2px">12</div>
<div class="t" style="left:893px;width:30.5px;text-align:right;top:823px;color:#000;letter-spacing:-.2px">13</div>
<div class="t" style="left:924px;width:30.5px;text-align:right;top:823px;color:#000;letter-spacing:-.2px">14</div>
<div class="t" style="left:955px;width:30.5px;text-align:right;top:823px;color:#000;letter-spacing:-.2px">15</div>
<div class="t" style="left:986px;width:30.5px;text-align:right;top:823px;color:#000;letter-spacing:-.2px">16</div>
<div class="t" style="left:1017px;width:30.5px;text-align:right;top:823px;color:#000;letter-spacing:-.2px">17</div>
<div class="t" style="left:1048px;width:30.5px;text-align:right;top:823px;color:#000;letter-spacing:-.2px">18</div>
<div class="t" style="left:862px;width:30.5px;text-align:right;top:838px;color:#000;letter-spacing:-.2px">19</div>
<div class="t" style="left:893px;width:30.5px;text-align:right;top:838px;color:#000;letter-spacing:-.2px">20</div>
<div class="t" style="left:924px;width:30.5px;text-align:right;top:838px;color:#000;letter-spacing:-.2px">21</div>
<div class="t" style="left:955px;width:30.5px;text-align:right;top:838px;color:#000;letter-spacing:-.2px">22</div>
<div class="t" style="left:986px;width:30.5px;text-align:right;top:838px;color:#000;letter-spacing:-.2px">23</div>
<div class="t" style="left:1017px;width:30.5px;text-align:right;top:838px;color:#000;letter-spacing:-.2px">24</div>
<div class="t" style="left:1048px;width:30.5px;text-align:right;top:838px;color:#000;letter-spacing:-.2px">25</div>
<div class="t" style="left:862px;width:30.5px;text-align:right;top:853px;color:#000;letter-spacing:-.2px">26</div>
<div class="t" style="left:893px;width:30.5px;text-align:right;top:853px;color:#000;letter-spacing:-.2px">27</div>
<div class="t" style="left:924px;width:30.5px;text-align:right;top:853px;color:#000;letter-spacing:-.2px">28</div>
<div class="t" style="left:955px;width:30.5px;text-align:right;top:853px;color:#000;letter-spacing:-.2px">29</div>
<div class="t" style="left:986px;width:30.5px;text-align:right;top:853px;color:#000;letter-spacing:-.2px">30</div>
<div class="t" style="left:1017px;width:30.5px;text-align:right;top:853px;color:#6d6d6d;letter-spacing:-.2px">1</div>
<div class="t" style="left:1048px;width:30.5px;text-align:right;top:853px;color:#6d6d6d;letter-spacing:-.2px">2</div>
<div class="t" style="left:862px;width:30.5px;text-align:right;top:868px;color:#6d6d6d;letter-spacing:-.2px">3</div>
<div class="t" style="left:893px;width:30.5px;text-align:right;top:868px;color:#6d6d6d;letter-spacing:-.2px">4</div>
<div class="t" style="left:924px;width:30.5px;text-align:right;top:868px;color:#6d6d6d;letter-spacing:-.2px">5</div>
<div class="t" style="left:955px;width:30.5px;text-align:right;top:868px;color:#6d6d6d;letter-spacing:-.2px">6</div>
<div class="t" style="left:986px;width:30.5px;text-align:right;top:868px;color:#6d6d6d;letter-spacing:-.2px">7</div>
<div class="t" style="left:1017px;width:30.5px;text-align:right;top:868px;color:#6d6d6d;letter-spacing:-.2px">8</div>
<div class="t" style="left:1048px;width:30.5px;text-align:right;top:868px;color:#6d6d6d;letter-spacing:-.2px">9</div>
<div class="a " style="left:929px;top:884px;width:29px;height:13px;border:1px solid #0078d7;border-radius:2px"></div>
<div class="t " style="left:964px;top:884px;letter-spacing:-0.091px;">Today: 3/3/2026</div>
<div class="a " style="left:403px;top:923px;width:848px;height:134px;background:#fff;border:1px solid #7f7f7f;border-left-color:#cfcfcf"></div>
<div class="a " style="left:404px;top:1039px;width:846px;height:17px;background:#f0f0f0"></div>
<div class="a " style="left:421px;top:1046px;width:809px;height:2px;background:#7c7c7c"></div>
<div class="a " style="left:403px;top:1057px;width:848px;height:16px;background:#fff;border-radius:0 0 8px 8px"></div>
<div class="t tah" style="left:402px;top:1058px;line-height:16px;height:16px;letter-spacing:-0.5px;">Done.</div>
<div class="a " style="left:6px;top:106px;width:27px;height:26px;background:#cce4f7;border:1px solid #a6d0f2;border-radius:3px"></div>
<svg style="left:14.5px;top:111.5px" width="9" height="15" viewBox="0 0 9 15"><path d="M0 0v12l2.800-2.600l2 4.400l1.800-.8l-2-4.300h3.800z" fill="#fff" stroke="#000" stroke-width="1"/></svg>
<svg style="left:49px;top:107px" width="24" height="24" viewBox="0 0 24 24"><path d="M.5 2.500q0-2 2-2h7l2.500 3h9q2 0 2 2V22.500H.5z" fill="#e39a52" stroke="#c07a3a"/><path d="M.5 7q6-2.500 11-2.500h11.500V22.500H.5z" fill="#f1b878"/><circle cx="11" cy="15" r="3.300" fill="none" stroke="#fff" stroke-width="1.500"/><path d="M13.500 17.500l4 3.500" stroke="#fff" stroke-width="1.800"/><circle cx="20.300" cy="4" r="3.700" fill="#3f8fe0" stroke="#1b5fb0" stroke-width=".8"/><circle cx="19.300" cy="3" r="1.400" fill="#cfe8ff"/></svg>
<svg style="left:76px;top:107px" width="24" height="24" viewBox="0 0 24 24"><rect x="3.500" y="5.500" width="15.500" height="10.500" fill="#6f6f6f"/><rect x="1" y="3" width="15.500" height="10.500" fill="#fff" stroke="#e4e4e4" stroke-width=".6"/><g transform="translate(13.500,8)"><path d="M0 0v12l2.800-2.600l2 4.400l1.800-.8l-2-4.300h3.800z" fill="#fff" stroke="#000" stroke-width="1"/></g><circle cx="20.300" cy="4" r="3.700" fill="#3f8fe0" stroke="#1b5fb0" stroke-width=".8"/><circle cx="19.300" cy="3" r="1.400" fill="#cfe8ff"/></svg>
<svg style="left:103px;top:107px" width="24" height="24" viewBox="0 0 24 24"><rect x=".5" y="2.500" width="21" height="20" fill="#b4b4b4" stroke="#555"/><rect x=".5" y="2.500" width="21" height="3.500" fill="#1b66c8"/><rect x="4.500" y="9.500" width="13" height="9" fill="#fff" stroke="#222"/><rect x="4.500" y="9.500" width="13" height="2.500" fill="#14348c"/><rect x="6.500" y="14" width="5" height="2.500" fill="#ddd" stroke="#555" stroke-width=".6"/><rect x="13" y="14" width="2.500" height="2.500" fill="#888"/><circle cx="20.300" cy="4" r="3.700" fill="#3f8fe0" stroke="#1b5fb0" stroke-width=".8"/><circle cx="19.300" cy="3" r="1.400" fill="#cfe8ff"/></svg>
<svg style="left:130px;top:107px" width="24" height="24" viewBox="0 0 24 24"><rect x="2.500" y="4.500" width="17" height="15" fill="#b9b9b9" stroke="#222" stroke-width="1.200"/><rect x="0.5" y="2.5" width="4" height="4" fill="#7f7fd0" stroke="#33337a" stroke-width=".7"/><rect x="0.5" y="10" width="4" height="4" fill="#7f7fd0" stroke="#33337a" stroke-width=".7"/><rect x="0.5" y="17.5" width="4" height="4" fill="#7f7fd0" stroke="#33337a" stroke-width=".7"/><rect x="9" y="2.5" width="4" height="4" fill="#7f7fd0" stroke="#33337a" stroke-width=".7"/><rect x="9" y="17.5" width="4" height="4" fill="#7f7fd0" stroke="#33337a" stroke-width=".7"/><rect x="17.5" y="2.5" width="4" height="4" fill="#7f7fd0" stroke="#33337a" stroke-width=".7"/><rect x="17.5" y="10" width="4" height="4" fill="#7f7fd0" stroke="#33337a" stroke-width=".7"/><rect x="17.5" y="17.5" width="4" height="4" fill="#7f7fd0" stroke="#33337a" stroke-width=".7"/><circle cx="20.300" cy="4" r="3.700" fill="#3f8fe0" stroke="#1b5fb0" stroke-width=".8"/><circle cx="19.300" cy="3" r="1.400" fill="#cfe8ff"/></svg>
<svg style="left:157px;top:107px" width="24" height="24" viewBox="0 0 24 24"><rect x="1.500" y="3.500" width="17" height="17" fill="#c9c9c9" stroke="#111" stroke-width="1.200" stroke-dasharray="2 1.500"/><path d="M1.500 9.500h17M1.500 15h17M7.500 3.500v17M13 3.500v17" stroke="#111" stroke-width="1" stroke-dasharray="1.500 1.500"/><path d="M15 15.500l3.200 8l3.200-8" stroke="#1010c0" stroke-width="2.200" fill="none"/><circle cx="20.300" cy="4" r="3.700" fill="#3f8fe0" stroke="#1b5fb0" stroke-width=".8"/><circle cx="19.300" cy="3" r="1.400" fill="#cfe8ff"/></svg>
<svg style="left:184px;top:107px" width="24" height="24" viewBox="0 0 24 24"><rect x="1.500" y="2.500" width="18" height="16" fill="#f4f4f4" stroke="#8a8a8a"/><path d="M4 16V7M4 16h14" stroke="#333"/><rect x="5.500" y="9" width="2" height="7" fill="#2a50d8"/><rect x="8.500" y="11" width="2" height="5" fill="#e03030"/><rect x="11.500" y="8" width="2" height="8" fill="#30a030"/><rect x="14.500" y="6" width="2" height="10" fill="#e0a020"/><path d="M15 15.500l3.200 8l3.200-8" stroke="#1010c0" stroke-width="2.200" fill="none"/><circle cx="20.300" cy="4" r="3.700" fill="#3f8fe0" stroke="#1b5fb0" stroke-width=".8"/><circle cx="19.300" cy="3" r="1.400" fill="#cfe8ff"/></svg>
<svg style="left:211px;top:107px" width="24" height="24" viewBox="0 0 24 24"><rect x=".5" y="5.500" width="23" height="13" fill="#3a4046" stroke="#20252a"/><rect x="2" y="11" width="13" height="3" fill="#38c8d8"/><rect x="2" y="15" width="9" height="2" fill="#9aa"/><rect x="16" y="11" width="6" height="5" fill="#dde"/><circle cx="20.300" cy="4" r="3.700" fill="#3f8fe0" stroke="#1b5fb0" stroke-width=".8"/><circle cx="19.300" cy="3" r="1.400" fill="#cfe8ff"/></svg>
<svg style="left:238px;top:107px" width="24" height="24" viewBox="0 0 24 24"><rect x=".5" y="2.500" width="23" height="12" fill="#3a4046" stroke="#20252a"/><rect x="2" y="8" width="13" height="3" fill="#38c8d8"/><rect x="16" y="8" width="6" height="5" fill="#dde"/><rect x="7.500" y="17.500" width="10" height="4" fill="#eee" stroke="#222"/><path d="M9 17v-1.500M11 17v-1.500M13 17v-1.500M15 17v-1.500M9 22v1.500M11 22v1.500M13 22v1.500M15 22v1.500" stroke="#222"/><circle cx="20.300" cy="4" r="3.700" fill="#3f8fe0" stroke="#1b5fb0" stroke-width=".8"/><circle cx="19.300" cy="3" r="1.400" fill="#cfe8ff"/></svg>
<svg style="left:265px;top:107px" width="24" height="24" viewBox="0 0 24 24"><rect x="1.500" y="2.500" width="17" height="16" fill="#c3d8c3" stroke="#444" stroke-width="1.200"/><path d="M9 10l11 11" stroke="#000" stroke-width="2.600"/><path d="M9 10l11 11" stroke="#fff" stroke-width="1"/><path d="M21.500 22.500l-6-1.200l4.800-4.800z" fill="#fff" stroke="#000"/><path d="M7.500 8.500l6 1.200l-4.800 4.800z" fill="#fff" stroke="#000"/><circle cx="20.300" cy="4" r="3.700" fill="#3f8fe0" stroke="#1b5fb0" stroke-width=".8"/><circle cx="19.300" cy="3" r="1.400" fill="#cfe8ff"/></svg>
<svg style="left:292px;top:107px" width="24" height="24" viewBox="0 0 24 24"><path d="M2 2h17v5h-2l-1-2.500H8l6 7l-6.500 8H16l1.500-3h2L19 23H2v-2l7-9l-7-8z" fill="#000"/><circle cx="20.300" cy="4" r="3.700" fill="#3f8fe0" stroke="#1b5fb0" stroke-width=".8"/><circle cx="19.300" cy="3" r="1.400" fill="#cfe8ff"/></svg>
<svg style="left:319px;top:107px" width="24" height="24" viewBox="0 0 24 24"><rect x=".5" y="2.500" width="21" height="20" fill="#fff" stroke="#14348c"/><rect x=".5" y="2.500" width="21" height="3.500" fill="#14348c"/><circle cx="20.300" cy="4" r="3.700" fill="#3f8fe0" stroke="#1b5fb0" stroke-width=".8"/><circle cx="19.300" cy="3" r="1.400" fill="#cfe8ff"/></svg>
<div class="t" style="left:320.5px;top:114px;font-weight:bold;font-size:12px;color:#1020c0;letter-spacing:-.2px;transform:scaleY(1.050)">INI</div>
<svg style="left:346px;top:107px" width="24" height="24" viewBox="0 0 24 24"><path d="M3 23V3" stroke="#14348c"/><path d="M1 5h2M1 9h2M1 13h2M1 17h2M1 21h2" stroke="#14348c"/><path d="M4 23V12l2-8l2 10l1-5l2 9l2-14l2 6l1 4l2-3l1.500 6V23z" fill="#1030e0"/><circle cx="20.300" cy="4" r="3.700" fill="#3f8fe0" stroke="#1b5fb0" stroke-width=".8"/><circle cx="19.300" cy="3" r="1.400" fill="#cfe8ff"/></svg>
<svg style="left:30px;top:128px" width="64" height="56" viewBox="0 0 64 56"><defs><filter id="ash" x="-30%" y="-30%" width="170%" height="170%"><feGaussianBlur in="SourceAlpha" stdDeviation="2"/><feOffset dx="2.500" dy="3"/><feComponentTransfer><feFuncA type="linear" slope=".55"/></feComponentTransfer><feMerge><feMergeNode/><feMergeNode in="SourceGraphic"/></feMerge></filter></defs><path d="M29.700 4.700L52.200 19.800H41.300V48.300H19V19.800H7.600z" fill="#ff0000" filter="url(#ash)"/></svg>
</body></html>
